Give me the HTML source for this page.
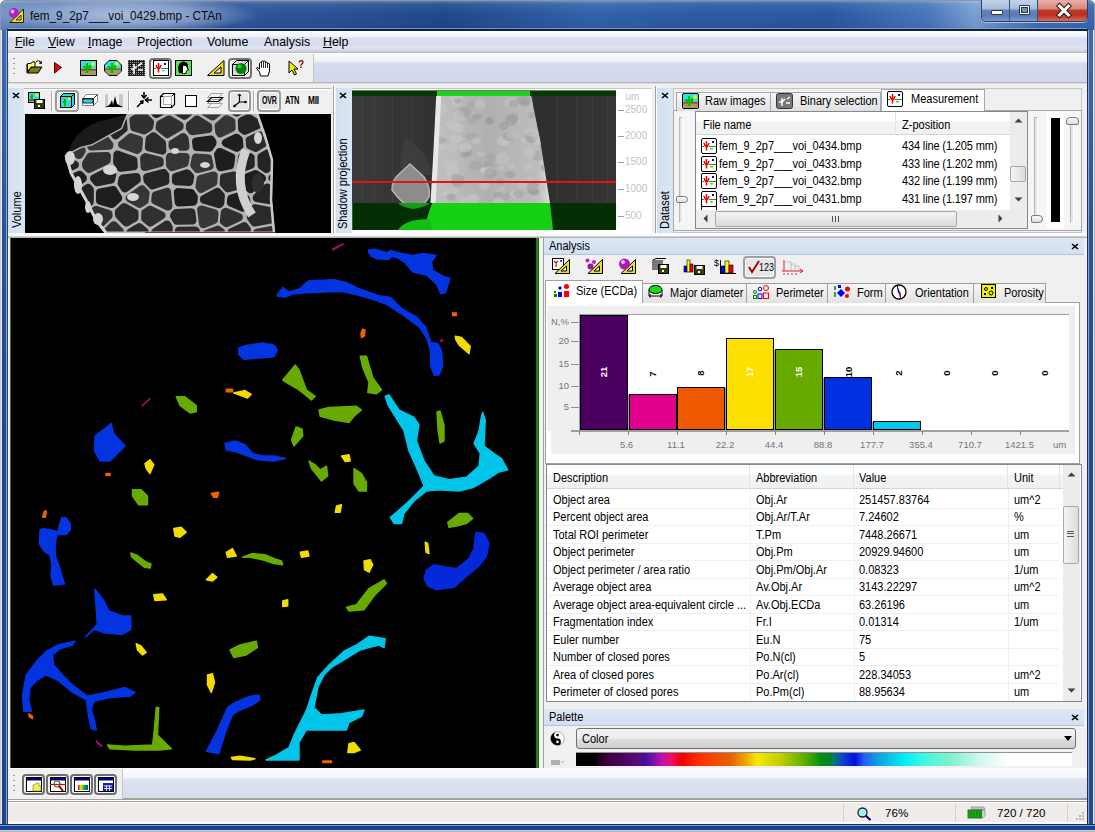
<!DOCTYPE html>
<html><head><meta charset="utf-8">
<style>
*{box-sizing:border-box;margin:0;padding:0}
html,body{width:1095px;height:832px;overflow:hidden;background:#fff}
body{position:relative;font-family:"Liberation Sans",sans-serif;font-size:11px;color:#000}
.a{position:absolute}
.t{position:absolute;white-space:pre;line-height:1}
svg{position:absolute;overflow:visible}
</style></head><body>
<!-- window frame -->
<div class="a" id="frame" style="left:0;top:0;width:1095px;height:832px;border-radius:6px 6px 0 0;background:linear-gradient(90deg,#6f8fc2 0px,#4a70ad 60px,#2f5799 220px,#2a5297 330px,#1f4a8c 445px,#3363ab 590px,#2d5ba5 700px,#2b5aa4 830px,#4a78bd 930px,#7aa0d2 975px,#3f70b8 1040px,#3a6ab4 1095px)"></div>
<div class="a" style="left:0;top:0;width:1095px;height:30px;border-radius:6px 6px 0 0;border:1px solid #8a96a8;border-bottom:none;background:linear-gradient(180deg,rgba(255,255,255,.28) 0,rgba(255,255,255,.08) 3px,rgba(255,255,255,0) 12px,rgba(0,0,40,.06) 24px,rgba(0,0,40,.12) 29px)"></div>
<div class="a" style="left:0;top:30px;width:8px;height:802px;background:linear-gradient(180deg,#3f6ab2 0,#2a5299 200px,#1e4590 400px,#1e4590 802px)"></div>
<div class="a" style="left:1087px;top:30px;width:8px;height:802px;background:linear-gradient(180deg,#3f6ab2 0,#2a5299 200px,#1e4a98 400px,#1e4a98 802px)"></div>
<div class="a" style="left:0;top:30px;width:2px;height:802px;background:linear-gradient(90deg,#c8ccd0 0,#c8ccd0 1px,#e8ecf0 1px)"></div>
<div class="a" style="left:6px;top:30px;width:2px;height:802px;background:linear-gradient(90deg,#90a8d0 0,#90a8d0 1px,#304060 1px)"></div>
<div class="a" style="left:1087px;top:30px;width:2px;height:802px;background:linear-gradient(90deg,#203050 0,#203050 1px,#90a8d0 1px)"></div>
<div class="a" style="left:1093px;top:30px;width:2px;height:802px;background:linear-gradient(90deg,#e0e8f0 0,#e0e8f0 1px,#b0b0b0 1px)"></div>
<div class="a" style="left:0;top:824px;width:1095px;height:8px;background:linear-gradient(180deg,#1a2a50 0,#1a2a50 1px,#7f9fd0 1px,#7f9fd0 2px,#0f3d8c 2px,#1d4d9c 6px,#c0cad8 6px,#c0cad8 7px,#b5b5b5 7px)"></div>
<!-- title -->
<div class="a" style="left:-10px;top:-4px;width:270px;height:38px;background:radial-gradient(ellipse 50% 50% at 50% 50%,rgba(215,226,244,.7) 0%,rgba(200,215,240,.5) 55%,rgba(180,200,235,.0) 100%)"></div>
<svg style="left:8px;top:7px" width="17" height="17"><path d="M2 15.5 L15.5 2 L15.5 15.5 Z" fill="#e8e020" stroke="#202000"/><path d="M8 13 L13 8 L13 13 Z" fill="#b8b880" stroke="#202000" stroke-width=".8"/><circle cx="6" cy="6" r="5" fill="#b020c0"/><circle cx="4.5" cy="4.5" r="2" fill="#f0b0f8"/></svg>
<div class="t" style="left:30px;top:10px;font-size:12.3px;color:#0a0a14;transform:scaleX(.955);transform-origin:0 0">fem_9_2p7___voi_0429.bmp - CTAn</div>
<!-- caption buttons -->
<div class="a" style="left:981px;top:0;width:107px;height:22px;border:1px solid #2e4060;border-top:none;border-radius:0 0 5px 5px;overflow:hidden;box-shadow:0 1px 0 #a8c4e8,-1px 0 0 #8aaad8">
 <div class="a" style="left:0;top:0;width:28px;height:21px;background:linear-gradient(180deg,#c4d2e8 0,#a9bedd 40%,#6384bd 50%,#5a7cb8 75%,#7a9cd0 100%);border-right:1px solid #3a5078"></div>
 <div class="a" style="left:28px;top:0;width:28px;height:21px;background:linear-gradient(180deg,#c4d2e8 0,#a9bedd 40%,#6384bd 50%,#5a7cb8 75%,#7a9cd0 100%);border-right:1px solid #3a5078"></div>
 <div class="a" style="left:56px;top:0;width:50px;height:21px;background:linear-gradient(180deg,#e8b0a8 0,#d88a80 40%,#c03a24 50%,#b83020 70%,#d86a58 100%)"></div>
</div>
<div class="a" style="left:991px;top:10px;width:12px;height:5px;background:#fff;border:1px solid #2a3448;border-radius:1px"></div>
<div class="a" style="left:1019px;top:5px;width:11px;height:10px;border:1px solid #2a3448;background:#fff;border-radius:1px"></div>
<div class="a" style="left:1021px;top:7px;width:7px;height:6px;border:1px solid #2a3448;background:#6f8fc4"></div>
<svg style="left:1057px;top:4px" width="14" height="13"><path d="M2.5 2 L11.5 11 M11.5 2 L2.5 11" stroke="#3a1a18" stroke-width="5" stroke-linecap="square"/><path d="M2.5 2 L11.5 11 M11.5 2 L2.5 11" stroke="#fff" stroke-width="3" stroke-linecap="square"/></svg>

<!-- client -->
<div class="a" id="client" style="left:8px;top:30px;width:1079px;height:794px;background:#f0f0f0;border-top:1px solid #102040"></div>
<div class="a" style="left:8px;top:28px;width:1079px;height:1px;background:#8fa6cc;opacity:.8"></div>
<div class="a" style="left:7px;top:29px;width:1081px;height:1px;background:#102040"></div>
<!-- menu bar -->
<div class="a" style="left:8px;top:31px;width:1079px;height:21px;background:linear-gradient(180deg,#fdfdfe 0,#eef1f8 6px,#d8deef 7px,#d8deef 14px,#dfe4f1 17px,#d6dae4 19px,#c8ccd6 21px)"></div>
<div class="a" style="left:8px;top:52px;width:1079px;height:1px;background:#bdbdc2"></div>
<div class="t" style="left:15px;top:36px;font-size:12.4px"><u>F</u>ile</div>
<div class="t" style="left:48px;top:36px;font-size:12.4px"><u>V</u>iew</div>
<div class="t" style="left:88px;top:36px;font-size:12.4px"><u>I</u>mage</div>
<div class="t" style="left:137px;top:36px;font-size:12.4px">Projection</div>
<div class="t" style="left:207px;top:36px;font-size:12.4px">Volume</div>
<div class="t" style="left:264px;top:36px;font-size:12.4px">Analysis</div>
<div class="t" style="left:323px;top:36px;font-size:12.4px"><u>H</u>elp</div>

<!-- main toolbar row -->
<div class="a" style="left:8px;top:53px;width:1079px;height:29px;background:linear-gradient(180deg,#fefefe 0,#eceff7 9px,#d5daec 10px,#d3d8ec 29px)"></div>
<div class="a" style="left:8px;top:82px;width:1079px;height:2px;background:linear-gradient(180deg,#b4b6be 0,#b4b6be 1px,#dcdcdc 1px)"></div>
<div class="a" id="tb1" style="left:9px;top:54px;width:305px;height:28px;background:#f0f0f0;border-right:1px solid #c5c5c5"></div>


<!-- main toolbar icons -->
<div class="a" style="left:13px;top:58px;width:2px;height:18px;background:repeating-linear-gradient(180deg,#a0a0a0 0,#a0a0a0 1px,transparent 1px,transparent 5px)"></div>
<svg style="left:26px;top:59px" width="17" height="16"><path d="M1 5 L1 14 L12 14 L16 8 L5 8 L2 13" fill="#7a7a18" stroke="#000" stroke-width="1"/><path d="M1.5 4.5 L5 4.5 L6 3 L9 3 L9 8 L5 8 L1.5 13 Z" fill="#ffff60" stroke="#000" stroke-width="1"/><path d="M10 3 Q13 0 15 4" fill="none" stroke="#000" stroke-width="1"/><path d="M13 4 L15.5 4.5 L15 2" fill="none" stroke="#000"/></svg>
<svg style="left:54px;top:62px" width="8" height="12"><path d="M0.5 0.5 L7.5 5.5 L0.5 11 Z" fill="#e00000" stroke="#400" stroke-width="1"/></svg>
<svg style="left:80px;top:60px" width="17" height="16"><rect x="0.5" y="0.5" width="16" height="15" fill="#30e0e8" stroke="#000"/><rect x="1" y="10" width="15" height="5" fill="#a89a58"/><rect x="1" y="9" width="15" height="1.5" fill="#c03030"/><circle cx="13" cy="4" r="2" fill="#f0f000"/><path d="M7 13 L7 3 M4 8 L4 6 M4 8 L10 8 L10 5" stroke="#00c000" stroke-width="2.4" fill="none"/></svg>
<svg style="left:104px;top:60px" width="18" height="16"><path d="M5 0.5 L13 0.5 L17.5 5 L17.5 11 L13 15.5 L5 15.5 L0.5 11 L0.5 5 Z" fill="#30e0e8" stroke="#000"/><path d="M1 9 L17 9 L17 11 L13 15 L5 15 L1 11 Z" fill="#a89a58"/><rect x="1" y="8.5" width="16" height="1.2" fill="#c03030"/><circle cx="13" cy="4" r="2" fill="#f0f000"/><path d="M8 13 L8 3 M5 8 L5 6 M5 8 L11 8 L11 5" stroke="#00c000" stroke-width="2.4" fill="none"/></svg>
<svg style="left:128px;top:60px" width="17" height="16"><defs><pattern id="nz" width="2" height="2" patternUnits="userSpaceOnUse"><rect width="2" height="2" fill="#202020"/><rect width="1" height="1" fill="#909090"/></pattern></defs><rect x="0" y="0" width="17" height="16" fill="url(#nz)"/><path d="M6 14 L6 4 M3 9 L6 9 L9 6 M10 10 L15 10 M10 6 L14 3" stroke="#fff" stroke-width="1.6" fill="none"/></svg>
<div class="a" style="left:149px;top:58px;width:23px;height:21px;border:2px solid #727272;border-radius:4px;background:#e6e6e6;box-shadow:inset 0 0 0 1px #fbfbfb"></div>
<svg style="left:153px;top:60px" width="16" height="16"><rect x="0.5" y="0.5" width="15" height="15" fill="#fff" stroke="#000"/><path d="M1 8.5 L3 8.5 M8 8.5 L15 8.5" stroke="#10a010" stroke-width="1"/><path d="M5.5 3 L5.5 12.5 M3 5 Q3.5 8 5.5 9 Q7.5 8 8 5" stroke="#f00000" stroke-width="1.5" fill="none"/><rect x="11" y="3" width="2" height="2" fill="#0000f0"/><rect x="9" y="10" width="3" height="1.5" fill="#30f0f0"/></svg>
<svg style="left:175px;top:60px" width="17" height="16"><rect x="0.5" y="0.5" width="16" height="15" fill="#60e060" stroke="#000"/><path d="M4 13 Q2 6 5 3 Q9 0 12 3 Q14 5 13 8 L14 10 L12 11 L11 14 Z" fill="#000"/><path d="M8 6 Q11 5 12 8 L12.5 10 L11 11 L10.5 13 L8 13 Z" fill="#fff"/></svg>
<svg style="left:207px;top:60px" width="18" height="16"><path d="M0.5 15.5 L17 0.5 L17 15.5 Z" fill="#e8e020" stroke="#000"/><path d="M7 13 L14 7 L14 13 Z" fill="#f0f0f0" stroke="#000"/></svg>
<div class="a" style="left:228px;top:58px;width:24px;height:21px;border:2px solid #727272;border-radius:4px;background:#e6e6e6;box-shadow:inset 0 0 0 1px #fbfbfb"></div>
<svg style="left:232px;top:60px" width="17" height="16"><path d="M0.5 4.5 L4.5 0.5 L16.5 0.5 L16.5 11.5 L12.5 15.5 L0.5 15.5 Z" fill="#d8d8d8" stroke="#000"/><path d="M0.5 4.5 L12.5 4.5 L12.5 15.5 M12.5 4.5 L16.5 0.5" stroke="#000" fill="none"/><circle cx="9" cy="8.5" r="5.5" fill="#008000"/><circle cx="7.5" cy="6.5" r="2" fill="#30d030"/></svg>
<svg style="left:256px;top:60px" width="16" height="17"><path d="M4.5 16 L3.5 12 L1 9 Q0 7.5 1.5 7.5 L3.5 9 L3.5 3.5 Q3.5 2.5 4.5 2.5 Q5.5 2.5 5.5 3.5 L5.5 2 Q5.5 1 6.5 1 Q7.5 1 7.5 2 L7.5 1.8 Q7.5 1 8.5 1 Q9.5 1 9.5 2 L9.5 3 Q9.5 2.2 10.5 2.2 Q11.5 2.2 11.5 3.2 L11.5 4 Q11.5 3.3 12.5 3.3 Q13.5 3.3 13.5 4.3 L13.5 11 L12 16 Z" fill="#fff" stroke="#000" stroke-width="1"/><path d="M5.5 3.5 L5.5 8 M7.5 2 L7.5 8 M9.5 3 L9.5 8 M11.5 4 L11.5 8" stroke="#000" stroke-width=".8"/></svg>
<svg style="left:288px;top:60px" width="17" height="16"><path d="M1 1 L1 13 L4 10 L6.5 15 L8.5 14 L6 9 L10 9 Z" fill="#f0f000" stroke="#000" stroke-width="1"/><text x="10" y="8" font-family="Liberation Sans" font-weight="bold" font-size="10" fill="#900000">?</text></svg>

<!-- top panels area -->
<div class="a" style="left:8px;top:84px;width:1079px;height:152px;background:#f0f0f0"></div>


<!-- ===== panel 1: Volume ===== -->
<div class="a" style="left:8px;top:88px;width:17px;height:145px;background:linear-gradient(90deg,#d3e0f1,#dbe6f4)"></div>
<svg style="left:12px;top:92px" width="8" height="7"><path d="M1 1 L7 6 M7 1 L1 6" stroke="#000" stroke-width="1.6"/></svg>
<div class="t" style="left:10.5px;top:227.5px;font-size:12px;transform:rotate(-90deg) scaleX(.917);transform-origin:0 0">Volume</div>
<div class="a" style="left:24px;top:88px;width:307px;height:26px;background:#f0f0f0;border-top:1px solid #b9b9b9;box-shadow:inset 0 1px 0 #fff"></div>
<svg style="left:28px;top:92px" width="17" height="17"><rect x="0.5" y="0.5" width="11" height="10" fill="#30e0e8" stroke="#000"/><path d="M4 9 L4 2 M2 5 L4 5" stroke="#00c000" stroke-width="2" fill="none"/><circle cx="9" cy="3" r="1.5" fill="#f0f000"/><rect x="1" y="7" width="10" height="2" fill="#c03030"/><rect x="6.5" y="7.5" width="10" height="9" fill="#3a3a0a" stroke="#000"/><rect x="8.5" y="8" width="6" height="3" fill="#fff"/><rect x="10" y="13" width="2" height="2" fill="#fff"/></svg>
<div class="a" style="left:51px;top:91px;width:2px;height:20px;border-left:1px solid #a8a8a8;border-right:1px solid #fff"></div>
<div class="a" style="left:55px;top:90px;width:24px;height:22px;border:2px solid #9a9a9a;border-radius:4px;background:#e6e6e6;box-shadow:inset 0 0 0 1px #fbfbfb"></div>
<svg style="left:60px;top:93px" width="15" height="15"><path d="M0.5 3.5 L3.5 0.5 L14.5 0.5 L14.5 11.5 L11.5 14.5 L0.5 14.5 Z" fill="#30d8e0" stroke="#000"/><path d="M0.5 3.5 L11.5 3.5 L11.5 14.5 M11.5 3.5 L14.5 0.5" stroke="#000" fill="none"/><path d="M5 13 L5 6 M3 9 L5 9" stroke="#00c000" stroke-width="2"/><circle cx="9" cy="6" r="1.5" fill="#f0f000"/></svg>
<svg style="left:82px;top:93px" width="16" height="15"><path d="M0.5 5.5 L4.5 1.5 L15.5 1.5 L15.5 8.5 L11.5 12.5 L0.5 12.5 Z" fill="#fff" stroke="#888"/><rect x="1" y="6" width="10" height="4" fill="#30d8e0" stroke="#000" stroke-width="0.8"/><path d="M0.5 5.5 L11.5 5.5 L15.5 1.5 M11.5 5.5 L11.5 12.5" stroke="#000" fill="none" stroke-width="0.8"/></svg>
<svg style="left:105px;top:93px" width="18" height="15"><rect x="0" y="1" width="18" height="14" fill="#c8c8c8"/><rect x="3" y="1" width="11" height="14" fill="#f0f0f0"/><path d="M0 14 L3 13 L5 11 L7 7 L8 12 L10 3 L12 11 L14 12 L18 14 Z" fill="#000"/></svg>
<div class="a" style="left:128px;top:91px;width:2px;height:20px;border-left:1px solid #a8a8a8;border-right:1px solid #fff"></div>
<svg style="left:136px;top:92px" width="17" height="16"><path d="M8 0 L8 5 M5.5 3 L8 6 L10.5 3 M16 8 L10 8 M12.5 5.5 L9.5 8 L12.5 10.5 M1 15 L6 10 M4 9.5 L7 9 L6.5 12" stroke="#000" stroke-width="1.5" fill="none"/></svg>
<svg style="left:160px;top:93px" width="15" height="15"><path d="M0.5 3.5 L3.5 0.5 L14.5 0.5 L14.5 11.5 L11.5 14.5 L0.5 14.5 Z" fill="#fff" stroke="#000" stroke-width="1.2"/><path d="M0.5 3.5 L11.5 3.5 L11.5 14.5 M11.5 3.5 L14.5 0.5" stroke="#000" fill="none"/><rect x="3.5" y="3.5" width="8" height="8" fill="none" stroke="#aaa"/></svg>
<div class="a" style="left:185px;top:95px;width:12px;height:12px;border:1.5px solid #000;background:#fff"></div>
<svg style="left:207px;top:93px" width="16" height="15"><path d="M0.5 4.5 L4.5 0.5 L15.5 0.5 L11.5 4.5 Z M0.5 10.5 L4.5 6.5 L15.5 6.5 L11.5 10.5 Z M0.5 14.5 L4.5 10.5 L15.5 10.5 L11.5 14.5 Z" fill="#f4f4f4" stroke="#a0a0a0"/><path d="M0.5 8.5 L4.5 4.5 L15.5 4.5 L11.5 8.5 Z" fill="none" stroke="#000" stroke-width="1.2"/></svg>
<div class="a" style="left:228px;top:90px;width:23px;height:22px;border:2px solid #9a9a9a;border-radius:4px;background:#e6e6e6;box-shadow:inset 0 0 0 1px #fbfbfb"></div>
<svg style="left:233px;top:93px" width="14" height="15"><path d="M6.5 1 L6.5 9 L12.5 9 M6.5 9 L1.5 13" stroke="#000" stroke-width="1.2" fill="none"/><circle cx="12.5" cy="9" r="1.3"/><circle cx="1.5" cy="13" r="1.3"/><path d="M5 3 L6.5 1 L8 3" stroke="#000" fill="none"/></svg>
<div class="a" style="left:253px;top:91px;width:2px;height:20px;border-left:1px solid #a8a8a8;border-right:1px solid #fff"></div>
<div class="a" style="left:257px;top:90px;width:24px;height:22px;border:2px solid #9a9a9a;border-radius:4px;background:#e6e6e6;box-shadow:inset 0 0 0 1px #fbfbfb"></div>
<div class="t" style="left:262px;top:95px;font-size:11px;transform:scaleX(.64);transform-origin:0 0;color:#000;font-weight:bold;letter-spacing:-0.3px">OVR</div>
<div class="t" style="left:285px;top:95px;font-size:11px;transform:scaleX(.68);transform-origin:0 0;color:#000;font-weight:bold;letter-spacing:-0.3px">ATN</div>
<div class="t" style="left:308px;top:95px;font-size:11px;transform:scaleX(.75);transform-origin:0 0;color:#000;font-weight:bold;letter-spacing:-0.3px">MII</div>
<!--VOL-->
<svg style="left:25px;top:114px;overflow:hidden" width="306" height="119"><rect width="306" height="119" fill="#000"/>
<path d="M43 40 Q48 18 72 8 L103 0 L96 14 L67 30 Z" fill="#1a1a1a"/>
<path d="M40.0,41.0 L55.0,33.0 L67.0,30.0 L85.0,20.0 L96.0,14.0 L102.0,-1.0 L232.0,-1.0 L240.0,22.0 L248.0,46.0 L247.0,86.0 L250.0,119.0 L81.0,119.0 L70.0,106.0 L60.0,86.0 L45.0,59.0 L40.0,41.0Z " fill="#b2b2b2"/>
<path d="M51.5,54.6 L52.6,53.9 L53.4,52.9 L53.8,51.8 L53.9,50.5 L53.6,49.3 L53.0,48.3 L52.0,47.5 L42.3,41.5 L41.8,41.8 L46.0,56.9 L51.5,54.6Z " fill="#242424"/>
<path d="M52.0,44.5 L53.2,45.0 L54.4,45.1 L55.6,44.8 L56.7,44.1 L57.5,43.2 L60.1,39.0 L60.6,37.9 L60.8,36.8 L60.6,35.7 L59.9,33.3 L55.5,34.4 L44.9,40.1 L52.0,44.5Z " fill="#363636"/>
<path d="M60.2,67.8 L61.0,67.0 L61.6,66.0 L61.8,64.9 L61.7,63.7 L61.6,63.1 L61.3,62.1 L60.6,61.2 L57.7,58.0 L56.7,57.3 L55.6,56.9 L54.3,56.8 L53.2,57.1 L47.1,59.7 L54.1,72.2 L60.2,67.8Z " fill="#1e1e1e"/>
<path d="M65.4,70.4 L64.3,69.9 L63.1,69.8 L61.9,70.0 L60.8,70.5 L55.3,74.5 L61.3,85.3 L61.3,85.3 L64.8,92.2 L65.5,92.1 L66.7,91.5 L67.3,91.0 L68.1,90.1 L68.6,89.1 L68.8,87.9 L68.9,75.9 L68.7,74.5 L68.0,73.3 L66.3,71.2 L65.4,70.4Z " fill="#242424"/>
<path d="M63.8,38.9 L62.7,39.5 L61.9,40.5 L57.6,47.4 L57.1,48.5 L57.0,49.7 L57.2,52.2 L57.5,53.5 L58.2,54.7 L61.1,57.7 L62.1,58.5 L63.3,58.9 L64.6,59.0 L65.8,58.6 L83.5,49.9 L84.6,49.0 L85.4,47.9 L85.7,46.5 L85.9,42.1 L85.7,40.8 L85.1,39.6 L84.2,38.7 L83.0,38.1 L81.7,38.0 L65.1,38.6 L63.8,38.9Z " fill="#303030"/>
<path d="M62.2,33.6 L62.8,34.7 L63.7,35.7 L64.9,36.3 L66.2,36.4 L84.6,35.7 L85.7,35.5 L86.7,35.0 L87.6,34.2 L88.1,33.1 L88.4,32.0 L88.4,31.2 L88.3,29.8 L87.7,28.5 L83.3,22.7 L67.7,31.3 L67.6,31.4 L67.5,31.4 L67.4,31.5 L62.0,32.8 L62.2,33.6Z " fill="#363636"/>
<path d="M66.3,94.8 L66.2,95.0 L71.3,105.2 L77.8,112.9 L86.4,104.4 L87.1,103.5 L87.5,102.4 L87.6,101.2 L87.4,99.4 L87.1,98.2 L86.5,97.2 L85.6,96.4 L84.6,95.9 L72.0,92.1 L70.7,92.0 L69.5,92.2 L68.4,92.8 L67.2,93.8 L66.3,94.8Z " fill="#303030"/>
<path d="M98.7,116.6 L98.3,115.5 L97.6,114.5 L91.7,108.4 L90.7,107.7 L89.5,107.3 L88.3,107.2 L87.1,107.6 L86.0,108.3 L79.4,114.8 L81.7,117.5 L98.7,117.5 L98.7,116.6Z " fill="#303030"/>
<path d="M87.4,23.8 L88.3,24.7 L89.5,25.2 L90.7,25.4 L92.0,25.1 L93.1,24.5 L101.2,17.8 L102.1,16.9 L102.6,15.7 L102.6,14.4 L101.9,6.5 L101.6,5.3 L101.3,4.8 L97.4,14.6 L97.3,14.7 L97.3,14.8 L97.2,14.9 L97.1,15.0 L97.0,15.2 L96.8,15.2 L96.7,15.3 L85.7,21.3 L85.6,21.4 L87.4,23.8Z " fill="#242424"/>
<path d="M66.2,61.4 L65.4,62.5 L65.0,63.8 L65.1,65.1 L65.1,65.4 L65.4,66.3 L66.0,67.1 L69.0,70.8 L70.1,71.7 L71.4,72.2 L72.8,72.2 L86.9,69.6 L88.0,69.2 L88.9,68.6 L89.6,67.6 L90.0,66.5 L91.2,61.4 L91.2,59.9 L90.6,58.5 L88.1,54.4 L87.3,53.5 L86.3,52.9 L85.2,52.6 L84.0,52.6 L82.9,52.9 L67.2,60.7 L66.2,61.4Z " fill="#242424"/>
<path d="M90.3,96.0 L89.9,97.1 L89.8,98.3 L90.1,101.5 L90.5,102.8 L91.2,103.9 L98.5,111.4 L99.6,112.2 L100.8,112.6 L102.2,112.5 L103.4,112.0 L111.5,107.2 L112.5,106.3 L113.2,105.1 L113.5,103.8 L113.5,99.0 L113.3,97.6 L112.6,96.3 L111.5,95.4 L101.0,89.6 L99.8,89.2 L98.6,89.1 L97.4,89.4 L96.3,90.1 L91.1,95.0 L90.3,96.0Z " fill="#2a2a2a"/>
<path d="M92.5,36.5 L91.3,36.6 L90.2,37.2 L89.3,38.0 L88.7,39.1 L88.4,40.3 L88.1,47.9 L88.2,49.1 L88.7,50.2 L92.3,56.0 L93.0,56.8 L94.0,57.5 L95.1,57.8 L96.2,57.8 L109.3,56.2 L110.5,55.9 L111.5,55.2 L112.2,54.3 L112.7,53.2 L112.8,52.0 L112.4,45.9 L112.2,44.8 L111.6,43.8 L110.8,43.0 L109.8,42.4 L93.8,36.7 L92.5,36.5Z " fill="#242424"/>
<path d="M73.0,74.9 L71.9,75.8 L71.3,77.0 L71.0,78.3 L70.9,86.5 L71.1,87.8 L71.7,88.9 L72.6,89.8 L73.8,90.4 L85.7,93.9 L87.1,94.1 L88.4,93.8 L89.6,93.0 L95.9,87.2 L96.6,86.4 L97.0,85.3 L97.2,84.3 L97.2,83.9 L97.0,82.8 L96.6,81.8 L91.6,73.8 L90.8,72.9 L89.8,72.3 L88.6,72.0 L87.5,72.0 L74.3,74.4 L73.0,74.9Z " fill="#1e1e1e"/>
<path d="M123.4,116.1 L122.5,114.8 L116.9,110.1 L115.8,109.4 L114.6,109.1 L113.4,109.2 L112.2,109.7 L103.2,115.1 L102.2,115.9 L101.6,116.8 L101.4,117.5 L123.8,117.5 L123.4,116.1Z " fill="#2a2a2a"/>
<path d="M92.6,70.0 L93.2,71.4 L96.4,76.6 L97.3,77.6 L98.4,78.2 L99.7,78.5 L101.0,78.3 L102.2,77.7 L114.1,69.0 L115.1,68.1 L115.7,66.8 L115.8,65.4 L115.5,62.5 L115.2,61.3 L114.5,60.2 L113.5,59.4 L112.3,59.0 L111.0,58.9 L97.1,60.6 L95.9,61.0 L94.9,61.7 L94.1,62.6 L93.7,63.8 L92.7,68.5 L92.6,70.0Z " fill="#242424"/>
<path d="M93.6,28.3 L93.1,29.4 L93.0,30.6 L93.2,31.8 L93.7,32.9 L94.5,33.7 L95.6,34.3 L110.7,39.7 L111.8,39.9 L113.0,39.8 L114.0,39.4 L114.9,38.7 L116.1,37.5 L116.9,36.3 L117.3,35.0 L118.0,26.2 L117.9,24.9 L117.3,23.6 L116.4,22.7 L115.2,22.1 L106.9,19.5 L105.6,19.3 L104.3,19.6 L103.2,20.2 L94.4,27.5 L93.6,28.3Z " fill="#363636"/>
<path d="M101.2,81.9 L100.6,83.1 L100.5,84.4 L100.8,85.7 L101.5,86.8 L102.5,87.7 L112.8,93.4 L114.2,93.9 L115.6,93.8 L116.9,93.3 L121.9,90.0 L122.8,89.2 L123.4,88.2 L123.7,87.1 L124.6,79.5 L124.5,78.3 L124.2,77.2 L123.5,76.3 L119.9,72.4 L119.0,71.7 L117.9,71.2 L116.8,71.1 L115.6,71.4 L114.6,71.9 L102.1,80.9 L101.2,81.9Z " fill="#363636"/>
<path d="M115.9,54.4 L116.4,55.4 L117.3,56.3 L118.3,56.8 L119.4,57.0 L120.6,56.9 L135.7,53.0 L137.0,52.4 L138.0,51.5 L138.6,50.3 L138.7,48.9 L138.6,46.4 L138.3,45.2 L137.7,44.1 L136.7,43.2 L135.6,42.7 L121.3,39.2 L119.9,39.1 L118.6,39.5 L117.5,40.3 L116.2,41.6 L115.5,42.5 L115.2,43.5 L115.1,44.6 L115.6,53.3 L115.9,54.4Z " fill="#303030"/>
<path d="M105.5,3.3 L104.9,4.3 L104.5,5.3 L104.5,6.4 L105.2,13.7 L105.5,14.9 L106.1,15.9 L106.9,16.7 L108.0,17.2 L117.9,20.2 L119.1,20.4 L120.2,20.3 L121.3,19.8 L126.4,16.4 L127.2,15.7 L127.8,14.8 L128.2,13.8 L129.0,9.0 L129.0,7.7 L128.6,6.5 L127.9,5.5 L122.8,0.5 L109.9,0.5 L106.4,2.6 L105.5,3.3Z " fill="#303030"/>
<path d="M200.0,117.4 L199.7,116.4 L199.1,115.4 L198.4,114.7 L195.2,112.4 L194.0,111.8 L192.7,111.6 L191.4,111.9 L179.7,116.3 L178.5,117.1 L178.2,117.5 L200.0,117.5 L200.0,117.4Z " fill="#303030"/>
<path d="M147.6,113.3 L147.5,112.2 L147.1,111.3 L145.6,108.5 L144.7,107.5 L143.7,106.8 L142.4,106.5 L141.1,106.6 L139.9,107.1 L128.1,114.7 L127.1,115.7 L126.4,117.0 L126.4,117.5 L147.6,117.5 L147.6,113.3Z " fill="#2a2a2a"/>
<path d="M125.3,91.8 L123.9,91.8 L122.7,92.4 L118.1,95.4 L117.1,96.2 L116.5,97.4 L116.3,98.7 L116.2,104.3 L116.3,105.5 L116.8,106.5 L117.6,107.4 L122.7,111.7 L123.7,112.4 L125.0,112.7 L126.2,112.6 L127.4,112.1 L138.7,104.8 L139.6,104.0 L140.3,103.0 L140.5,101.8 L140.5,100.6 L140.1,99.5 L139.3,98.5 L138.3,97.8 L126.6,92.1 L125.3,91.8Z " fill="#303030"/>
<path d="M128.6,2.9 L129.6,3.6 L130.8,4.0 L132.1,4.0 L133.3,3.6 L139.2,0.5 L126.2,0.5 L128.6,2.9Z " fill="#1e1e1e"/>
<path d="M140.8,55.6 L139.8,55.1 L138.7,54.9 L137.6,55.0 L121.2,59.2 L120.1,59.7 L119.2,60.4 L118.6,61.3 L118.2,62.4 L118.2,63.5 L118.5,66.6 L118.8,67.9 L119.5,69.0 L124.4,74.2 L125.3,74.9 L126.4,75.4 L127.5,75.5 L128.6,75.3 L141.6,71.1 L142.8,70.5 L143.7,69.6 L144.2,68.5 L144.4,67.2 L144.2,60.7 L143.9,59.3 L143.2,58.2 L141.6,56.3 L140.8,55.6Z " fill="#242424"/>
<path d="M121.5,22.2 L120.9,23.2 L120.6,24.4 L119.9,33.0 L120.0,34.4 L120.6,35.7 L121.6,36.7 L122.9,37.2 L136.4,40.6 L137.7,40.7 L138.9,40.4 L140.0,39.7 L140.8,38.7 L140.9,38.6 L141.3,37.5 L141.4,36.3 L141.0,28.9 L140.8,27.8 L140.3,26.8 L139.5,26.0 L131.0,19.1 L129.9,18.4 L128.7,18.2 L127.4,18.3 L126.3,18.8 L122.4,21.4 L121.5,22.2Z " fill="#2a2a2a"/>
<path d="M143.9,39.0 L142.7,39.6 L141.8,40.7 L141.3,41.5 L140.9,42.6 L140.8,43.8 L141.2,51.5 L141.5,52.8 L142.1,53.9 L143.8,55.8 L144.6,56.6 L145.7,57.0 L146.9,57.2 L148.0,57.0 L160.8,53.0 L162.0,52.3 L163.0,51.3 L163.5,49.9 L164.7,43.8 L164.7,42.7 L164.4,41.6 L163.9,40.6 L163.0,39.8 L162.0,39.3 L160.8,39.1 L145.3,38.7 L143.9,39.0Z " fill="#363636"/>
<path d="M130.6,14.7 L131.1,16.0 L132.0,17.0 L139.8,23.3 L140.8,23.9 L142.0,24.2 L143.2,24.1 L144.3,23.6 L156.6,16.2 L157.6,15.4 L158.3,14.2 L158.6,12.9 L158.6,11.6 L158.4,10.2 L157.7,8.9 L156.6,8.0 L146.2,1.9 L145.0,1.5 L143.6,1.4 L142.3,1.8 L133.4,6.5 L132.4,7.2 L131.7,8.2 L131.3,9.4 L130.6,13.2 L130.6,14.7Z " fill="#303030"/>
<path d="M128.5,78.0 L127.7,78.8 L127.1,79.7 L126.8,80.8 L126.2,86.0 L126.3,87.2 L126.7,88.4 L127.4,89.3 L128.4,90.0 L141.2,96.3 L142.4,96.6 L143.7,96.6 L144.9,96.2 L145.9,95.4 L146.4,94.9 L147.0,94.0 L147.3,92.9 L147.4,91.8 L146.0,77.3 L145.7,76.1 L145.1,75.1 L144.2,74.3 L143.1,73.8 L141.9,73.7 L140.8,73.9 L129.5,77.5 L128.5,78.0Z " fill="#303030"/>
<path d="M210.0,2.1 L211.1,2.4 L212.4,2.4 L213.5,2.1 L216.7,0.5 L206.9,0.5 L210.0,2.1Z " fill="#1e1e1e"/>
<path d="M147.2,68.4 L147.7,69.5 L148.6,70.3 L149.6,70.9 L150.8,71.2 L164.1,71.9 L165.2,71.8 L166.3,71.4 L167.3,70.6 L167.9,69.7 L168.3,68.6 L169.1,63.2 L169.1,62.0 L168.8,60.8 L168.1,59.8 L165.1,56.6 L164.2,55.9 L163.2,55.5 L162.0,55.3 L160.9,55.5 L149.7,59.1 L148.5,59.7 L147.6,60.6 L147.0,61.7 L146.9,63.0 L147.0,67.3 L147.2,68.4Z " fill="#242424"/>
<path d="M175.0,116.7 L174.5,115.4 L173.8,114.4 L172.9,113.4 L171.7,112.8 L170.4,112.6 L153.8,112.8 L152.5,113.0 L151.4,113.6 L150.6,114.4 L150.0,115.5 L149.8,116.8 L149.8,117.5 L175.1,117.5 L175.0,116.7Z " fill="#2a2a2a"/>
<path d="M145.4,99.7 L145.1,101.0 L145.0,101.7 L145.1,102.8 L145.6,104.0 L148.3,108.8 L149.2,109.9 L150.4,110.6 L151.8,110.8 L167.4,110.6 L168.8,110.4 L169.9,109.7 L170.8,108.7 L171.3,107.5 L171.4,106.1 L170.3,97.7 L170.0,96.6 L169.3,95.6 L168.4,94.8 L167.3,94.4 L166.1,94.2 L151.1,95.0 L149.6,95.3 L148.3,96.3 L146.1,98.6 L145.4,99.7Z " fill="#2a2a2a"/>
<path d="M157.5,5.2 L158.6,5.7 L159.8,5.8 L160.9,5.5 L162.0,4.9 L167.4,0.5 L149.4,0.5 L157.5,5.2Z " fill="#2a2a2a"/>
<path d="M169.9,39.6 L168.8,40.1 L167.9,40.8 L167.2,41.7 L166.8,42.8 L165.3,50.6 L165.3,51.9 L165.6,53.1 L166.3,54.1 L169.8,57.9 L170.9,58.7 L172.3,59.1 L173.7,59.0 L185.6,55.9 L186.7,55.4 L187.7,54.6 L188.3,53.6 L188.6,52.4 L188.6,51.2 L187.0,43.4 L186.6,42.2 L185.7,41.2 L184.6,40.5 L183.3,40.2 L171.0,39.5 L169.9,39.6Z " fill="#363636"/>
<path d="M161.8,36.5 L163.0,35.9 L163.9,34.8 L164.4,33.6 L164.5,32.2 L163.6,24.3 L163.3,23.2 L162.8,22.3 L161.6,20.7 L160.7,19.9 L159.7,19.3 L158.5,19.1 L157.4,19.2 L156.3,19.6 L145.4,26.2 L144.3,27.2 L143.6,28.5 L143.5,29.9 L143.6,32.6 L143.8,33.8 L144.4,34.8 L145.3,35.7 L146.3,36.2 L147.5,36.4 L160.4,36.7 L161.8,36.5Z " fill="#303030"/>
<path d="M151.5,74.3 L150.3,74.9 L149.4,75.9 L148.8,77.1 L148.7,78.5 L149.7,88.9 L150.0,90.1 L150.7,91.1 L151.6,91.9 L152.7,92.4 L153.9,92.5 L168.3,91.8 L169.4,91.6 L170.4,91.1 L171.2,90.4 L171.6,89.9 L172.2,88.8 L172.5,87.7 L172.8,83.6 L172.7,82.3 L172.2,81.1 L169.4,76.7 L168.6,75.8 L167.5,75.2 L166.3,74.9 L152.9,74.1 L151.5,74.3Z " fill="#1e1e1e"/>
<path d="M161.7,8.7 L161.2,9.7 L161.0,10.9 L160.9,14.1 L161.1,15.4 L161.7,16.6 L163.9,19.6 L165.0,20.5 L166.3,21.1 L167.7,21.2 L183.8,19.1 L185.0,18.8 L186.0,18.1 L186.8,17.2 L187.2,16.1 L187.3,14.8 L187.1,12.0 L186.8,10.8 L186.1,9.8 L185.2,9.0 L174.0,2.1 L172.8,1.6 L171.6,1.5 L170.4,1.7 L169.4,2.3 L162.5,7.9 L161.7,8.7Z " fill="#303030"/>
<path d="M170.5,73.5 L171.1,74.8 L172.7,77.2 L173.4,78.1 L174.5,78.7 L175.6,79.0 L176.8,79.0 L177.9,78.6 L190.3,71.9 L191.4,71.0 L192.1,69.9 L192.4,68.6 L192.7,61.7 L192.6,60.4 L192.1,59.3 L191.2,58.4 L190.2,57.7 L188.9,57.5 L187.7,57.6 L174.6,61.0 L173.6,61.5 L172.7,62.2 L172.0,63.2 L171.7,64.3 L170.5,72.0 L170.5,73.5Z " fill="#363636"/>
<path d="M176.0,91.4 L174.7,91.7 L173.6,92.4 L172.7,93.4 L172.2,94.6 L172.2,95.9 L174.0,110.3 L174.7,112.0 L174.9,112.4 L175.8,113.4 L177.0,114.0 L178.4,114.2 L179.7,113.9 L190.3,109.8 L191.2,109.3 L192.0,108.5 L192.6,107.5 L192.8,106.5 L193.5,99.8 L193.4,98.4 L192.8,97.1 L191.9,96.1 L190.7,95.5 L177.3,91.6 L176.0,91.4Z " fill="#363636"/>
<path d="M190.2,9.6 L189.7,10.8 L189.6,12.1 L190.2,18.2 L190.4,19.1 L190.8,20.0 L191.8,21.6 L192.5,22.5 L193.5,23.2 L194.6,23.5 L195.8,23.5 L196.9,23.1 L208.4,17.6 L209.3,17.0 L210.0,16.1 L210.5,15.0 L210.6,13.9 L210.4,7.4 L210.1,6.0 L209.3,4.8 L208.2,4.0 L203.3,1.5 L202.2,1.2 L201.0,1.1 L199.9,1.4 L198.9,2.0 L191.1,8.7 L190.2,9.6Z " fill="#363636"/>
<path d="M185.6,37.5 L186.8,36.9 L187.8,36.0 L190.8,31.6 L191.3,30.6 L191.5,29.5 L191.5,28.2 L191.4,27.0 L190.9,26.0 L189.4,23.5 L188.6,22.6 L187.7,22.0 L186.6,21.6 L185.5,21.6 L170.5,23.5 L169.3,23.8 L168.3,24.5 L167.5,25.5 L167.1,26.7 L167.0,27.9 L167.7,33.5 L168.1,34.8 L168.9,35.9 L170.1,36.7 L171.4,37.0 L184.3,37.7 L185.6,37.5Z " fill="#1e1e1e"/>
<path d="M195.1,33.9 L193.8,34.0 L192.5,34.6 L191.5,35.6 L189.7,38.3 L189.2,39.3 L189.0,40.3 L189.1,41.3 L191.4,53.7 L191.9,54.9 L192.6,55.9 L193.0,56.2 L194.0,56.9 L195.2,57.2 L196.5,57.2 L205.9,55.3 L207.0,54.9 L208.0,54.2 L208.7,53.1 L209.1,52.0 L210.2,43.6 L210.2,42.4 L209.7,41.2 L209.0,40.2 L207.9,39.5 L196.5,34.3 L195.1,33.9Z " fill="#1e1e1e"/>
<path d="M194.3,74.3 L193.0,73.8 L191.7,73.8 L190.4,74.2 L177.1,81.5 L176.0,82.3 L175.3,83.4 L175.0,84.6 L174.9,85.5 L175.0,86.8 L175.6,88.1 L176.6,89.0 L177.8,89.6 L192.9,94.1 L194.1,94.2 L195.3,94.0 L196.4,93.4 L197.6,92.5 L198.4,91.7 L198.9,90.8 L199.2,89.7 L199.9,82.3 L199.9,81.2 L199.6,80.2 L199.0,79.3 L195.3,75.1 L194.3,74.3Z " fill="#242424"/>
<path d="M196.6,95.9 L196.0,96.9 L195.8,98.0 L194.9,106.9 L195.0,108.3 L195.5,109.6 L196.5,110.6 L199.1,112.5 L200.4,113.1 L201.8,113.2 L203.2,112.8 L215.6,106.9 L216.6,106.2 L217.4,105.1 L217.8,103.9 L217.8,102.6 L217.3,101.3 L216.5,100.3 L215.4,99.6 L202.2,94.0 L200.8,93.7 L199.5,93.9 L198.2,94.5 L197.4,95.2 L196.6,95.9Z " fill="#303030"/>
<path d="M185.4,6.0 L186.5,6.5 L187.8,6.6 L189.0,6.3 L190.0,5.7 L196.2,0.5 L176.4,0.5 L185.4,6.0Z " fill="#363636"/>
<path d="M247.5,112.5 L246.2,112.1 L245.0,112.2 L231.3,114.8 L230.1,115.2 L229.2,116.0 L228.5,117.0 L228.3,117.5 L248.4,117.5 L247.9,112.8 L247.5,112.5Z " fill="#303030"/>
<path d="M203.8,115.2 L203.1,116.2 L202.6,117.4 L202.6,117.5 L225.7,117.5 L225.8,116.1 L225.8,114.6 L225.1,113.3 L222.5,109.7 L221.5,108.7 L220.3,108.2 L218.9,108.1 L217.6,108.4 L204.8,114.5 L203.8,115.2Z " fill="#2a2a2a"/>
<path d="M214.1,4.3 L213.4,5.1 L213.0,6.2 L212.9,7.3 L213.1,15.0 L213.3,16.2 L213.8,17.2 L214.6,18.0 L217.3,20.1 L218.6,20.8 L220.0,21.0 L221.4,20.6 L234.3,14.7 L235.4,14.0 L235.6,13.8 L232.4,4.8 L225.7,0.5 L225.6,0.5 L221.4,0.5 L215.1,3.6 L214.1,4.3Z " fill="#242424"/>
<path d="M197.0,59.8 L195.9,60.7 L195.3,61.8 L195.0,63.1 L194.7,69.5 L194.9,71.0 L195.6,72.3 L199.8,77.1 L200.7,77.8 L201.7,78.3 L202.8,78.4 L203.9,78.3 L213.6,75.4 L214.8,74.8 L215.8,73.8 L216.3,72.5 L216.4,71.2 L215.6,62.7 L215.3,61.6 L214.7,60.6 L213.8,59.8 L211.0,58.0 L209.6,57.5 L208.1,57.5 L198.2,59.4 L197.0,59.8Z " fill="#2a2a2a"/>
<path d="M198.0,26.0 L197.2,27.0 L196.8,28.2 L196.8,29.5 L197.3,30.7 L198.0,31.8 L199.1,32.5 L210.1,37.5 L211.3,37.8 L212.6,37.7 L213.8,37.2 L216.5,35.6 L217.4,34.9 L218.0,34.0 L218.4,32.9 L218.4,31.8 L217.9,25.2 L217.7,24.2 L217.1,23.2 L216.4,22.4 L214.0,20.5 L213.0,20.0 L211.9,19.7 L210.8,19.7 L209.8,20.1 L199.0,25.2 L198.0,26.0Z " fill="#1e1e1e"/>
<path d="M201.9,89.3 L202.4,90.5 L203.2,91.5 L204.3,92.2 L216.5,97.4 L217.6,97.7 L218.8,97.6 L219.9,97.2 L220.9,96.6 L221.6,95.6 L225.0,89.6 L225.4,88.2 L225.4,86.8 L224.8,84.0 L224.3,82.8 L223.4,81.7 L219.3,78.3 L218.2,77.7 L216.9,77.4 L215.6,77.6 L205.1,80.7 L204.0,81.2 L203.2,82.0 L202.5,83.0 L202.3,84.1 L201.9,88.1 L201.9,89.3Z " fill="#1e1e1e"/>
<path d="M220.8,37.1 L219.5,37.2 L218.3,37.7 L215.0,39.7 L214.1,40.5 L213.4,41.4 L213.1,42.6 L211.7,52.7 L211.7,53.9 L212.0,54.9 L212.7,55.9 L213.5,56.6 L214.9,57.5 L216.1,58.0 L217.3,58.2 L218.5,57.9 L227.3,54.6 L228.3,54.0 L229.2,53.1 L229.7,52.0 L229.8,50.8 L229.6,43.3 L229.5,42.3 L229.0,41.2 L228.2,40.4 L227.3,39.8 L222.1,37.4 L220.8,37.1Z " fill="#242424"/>
<path d="M228.1,81.8 L227.7,83.1 L227.7,84.4 L227.8,84.8 L228.2,85.9 L228.9,86.8 L229.9,87.5 L231.0,87.9 L242.9,90.1 L244.1,90.2 L245.2,89.8 L245.8,89.5 L245.5,86.1 L245.5,86.0 L245.9,71.4 L245.1,70.6 L244.1,69.9 L242.9,69.6 L241.7,69.5 L240.5,69.9 L239.5,70.6 L228.9,80.7 L228.1,81.8Z " fill="#242424"/>
<path d="M221.9,101.0 L221.8,102.2 L222.0,103.9 L222.2,105.0 L222.7,105.9 L226.4,110.9 L227.1,111.7 L228.1,112.3 L229.2,112.5 L230.4,112.5 L247.6,109.2 L246.2,93.3 L246.1,93.3 L245.1,93.0 L230.7,90.3 L229.5,90.3 L228.3,90.6 L227.3,91.3 L226.5,92.3 L222.3,99.8 L221.9,101.0Z " fill="#2a2a2a"/>
<path d="M219.2,74.7 L220.2,75.9 L223.1,78.3 L224.1,78.9 L225.2,79.2 L226.4,79.1 L227.5,78.8 L228.4,78.1 L239.8,67.3 L240.5,66.4 L240.9,65.3 L241.0,64.1 L240.7,63.0 L240.1,61.9 L239.3,61.1 L232.9,56.8 L231.7,56.2 L230.5,56.1 L229.2,56.3 L220.4,59.7 L219.2,60.3 L218.4,61.3 L217.9,62.5 L217.8,63.8 L218.7,73.2 L219.2,74.7Z " fill="#1e1e1e"/>
<path d="M221.5,33.2 L222.3,34.3 L223.4,35.1 L228.9,37.6 L230.1,37.9 L231.4,37.9 L232.6,37.4 L240.3,32.7 L241.2,32.0 L241.6,31.4 L238.6,22.5 L237.0,17.9 L236.9,17.8 L235.7,17.4 L234.5,17.4 L233.4,17.7 L223.0,22.5 L222.0,23.1 L221.2,24.1 L220.7,25.2 L220.7,26.4 L221.1,31.8 L221.5,33.2Z " fill="#2a2a2a"/>
<path d="M232.8,53.0 L233.4,54.1 L234.3,55.0 L239.3,58.4 L240.5,58.9 L241.8,59.1 L243.0,58.8 L244.1,58.1 L246.2,56.3 L246.5,46.2 L242.9,35.5 L242.7,35.5 L241.3,35.5 L240.1,36.0 L234.3,39.5 L233.2,40.4 L232.6,41.7 L232.4,43.0 L232.6,51.8 L232.8,53.0Z " fill="#242424"/>
<path d="M243.9,61.9 L243.4,63.1 L243.4,64.4 L243.8,65.7 L244.6,66.8 L245.9,68.1 L246.2,59.7 L244.8,60.9 L243.9,61.9Z " fill="#2a2a2a"/>
<ellipse cx="85" cy="56" rx="7" ry="5" fill="#d6d6d6"/>
<ellipse cx="108" cy="83" rx="6" ry="4" fill="#d6d6d6"/>
<ellipse cx="45" cy="44" rx="5" ry="7" fill="#d6d6d6"/>
<ellipse cx="53" cy="71" rx="4" ry="9" fill="#d6d6d6"/>
<ellipse cx="63" cy="93" rx="3" ry="6" fill="#d6d6d6"/>
<ellipse cx="180" cy="51" rx="5" ry="3" fill="#d6d6d6"/>
<ellipse cx="150" cy="37" rx="4" ry="3" fill="#d6d6d6"/>
<ellipse cx="73" cy="105" rx="5" ry="6" fill="#d6d6d6"/>
<ellipse cx="233" cy="24" rx="4" ry="6" fill="#d6d6d6"/>
<path d="M221 36 Q207 71 227 101" stroke="#d0d0d0" stroke-width="9" fill="none"/>
<ellipse cx="233" cy="69" rx="6" ry="10" fill="#2e2e2e"/>
<path d="M41 41 L46 59 L61 86 L71 106 L81 119" stroke="#d4d4d4" stroke-width="3" fill="none"/>
<path d="M232 -1 L240 22 L247 46 L246 86 L249 119" stroke="#c8c8c8" stroke-width="2.5" fill="none"/>
<rect x="120" y="118" width="130" height="1" fill="#6a3a6a"/>
</svg>
<!--/VOL-->
<div class="a" style="left:333px;top:86px;width:1px;height:148px;background:#a0a0a0"></div>
<div class="a" style="left:334px;top:86px;width:1px;height:148px;background:#fff"></div>

<!-- ===== panel 2: Shadow projection ===== -->
<div class="a" style="left:336px;top:88px;width:16px;height:145px;background:linear-gradient(90deg,#d3e0f1,#dbe6f4)"></div>
<svg style="left:339px;top:92px" width="8" height="7"><path d="M1 1 L7 6 M7 1 L1 6" stroke="#000" stroke-width="1.6"/></svg>
<div class="t" style="left:337px;top:229px;font-size:12px;transform:rotate(-90deg) scaleX(.917);transform-origin:0 0">Shadow projection</div>
<div class="a" style="left:352px;top:88px;width:300px;height:145px;background:#fff;border-top:1px solid #c8c8c8"></div>
<!--SHAD-->
<svg style="left:352px;top:90px;overflow:hidden" width="264" height="140"><defs>
<linearGradient id="sh" x1="0" x2="1" y1="0" y2="0"><stop offset="0" stop-color="#e8e8e8"/><stop offset="0.08" stop-color="#c0c0c0"/><stop offset="0.5" stop-color="#b0b0b0"/><stop offset="0.9" stop-color="#bdbdbd"/><stop offset="1" stop-color="#e0e0e0"/></linearGradient>
<linearGradient id="bg" x1="0" x2="1" y1="0" y2="0"><stop offset="0" stop-color="#3a3a3a"/><stop offset="0.3" stop-color="#323232"/><stop offset="0.7" stop-color="#2e2e2e"/><stop offset="1" stop-color="#353535"/></linearGradient>
<clipPath id="shc"><polygon points="85,0 178,0 188,50 198,113 199,140 72,140 80,113 82,60"/></clipPath>
</defs>
<rect width="264" height="140" fill="url(#bg)"/>
<rect x="10" y="0" width="1" height="140" fill="#444" opacity="0.6"/>
<rect x="22" y="0" width="1" height="140" fill="#444" opacity="0.6"/>
<rect x="40" y="0" width="1" height="140" fill="#444" opacity="0.6"/>
<rect x="60" y="0" width="1" height="140" fill="#444" opacity="0.6"/>
<rect x="180" y="0" width="1" height="140" fill="#444" opacity="0.6"/>
<rect x="205" y="0" width="1" height="140" fill="#444" opacity="0.6"/>
<rect x="225" y="0" width="1" height="140" fill="#444" opacity="0.6"/>
<rect x="240" y="0" width="1" height="140" fill="#444" opacity="0.6"/>
<rect x="255" y="0" width="1" height="140" fill="#444" opacity="0.6"/>
<path d="M53 48 Q76 60 80 85 L50 85 Q46 65 53 48 Z" fill="#404040" opacity="0.8"/>
<path d="M58 74 L72 87 Q79 98 77 107 Q72 116 61 119 Q50 114 40 100 Q40 90 46 85 Z" fill="#8c8c8c" stroke="#b4b4b4" stroke-width="1.5"/>
<polygon points="85,0 178,0 188,50 198,113 199,140 72,140 80,113 82,60" fill="url(#sh)"/>
<g clip-path="url(#shc)">
<ellipse cx="113.0" cy="64.2" rx="4.5" ry="3.8" fill="#9a9a9a" opacity="0.55"/>
<ellipse cx="151.6" cy="103.2" rx="4.9" ry="4.0" fill="#a2a2a2" opacity="0.55"/>
<ellipse cx="192.5" cy="56.3" rx="6.3" ry="5.0" fill="#a2a2a2" opacity="0.55"/>
<ellipse cx="112.4" cy="22.2" rx="6.7" ry="5.1" fill="#9a9a9a" opacity="0.55"/>
<ellipse cx="158.5" cy="12.9" rx="6.0" ry="5.0" fill="#c4c4c4" opacity="0.55"/>
<ellipse cx="169.9" cy="94.1" rx="4.1" ry="3.4" fill="#c8c8c8" opacity="0.55"/>
<ellipse cx="163.0" cy="104.6" rx="4.6" ry="4.2" fill="#c8c8c8" opacity="0.55"/>
<ellipse cx="189.2" cy="20.4" rx="4.5" ry="2.7" fill="#c8c8c8" opacity="0.55"/>
<ellipse cx="110.8" cy="109.3" rx="4.7" ry="4.0" fill="#c4c4c4" opacity="0.55"/>
<ellipse cx="132.2" cy="95.2" rx="5.3" ry="4.3" fill="#c8c8c8" opacity="0.55"/>
<ellipse cx="149.3" cy="102.7" rx="5.7" ry="5.6" fill="#c4c4c4" opacity="0.55"/>
<ellipse cx="192.1" cy="77.8" rx="3.7" ry="3.4" fill="#9a9a9a" opacity="0.55"/>
<ellipse cx="163.0" cy="28.6" rx="6.3" ry="5.2" fill="#c4c4c4" opacity="0.55"/>
<ellipse cx="101.1" cy="57.6" rx="5.6" ry="4.4" fill="#c4c4c4" opacity="0.55"/>
<ellipse cx="172.1" cy="49.9" rx="3.6" ry="2.6" fill="#c8c8c8" opacity="0.55"/>
<ellipse cx="179.6" cy="10.7" rx="5.5" ry="3.4" fill="#c4c4c4" opacity="0.55"/>
<ellipse cx="145.8" cy="104.6" rx="4.1" ry="2.9" fill="#9a9a9a" opacity="0.55"/>
<ellipse cx="120.5" cy="14.2" rx="5.4" ry="3.3" fill="#a2a2a2" opacity="0.55"/>
<ellipse cx="190.0" cy="37.2" rx="4.1" ry="3.6" fill="#c4c4c4" opacity="0.55"/>
<ellipse cx="121.0" cy="108.6" rx="6.6" ry="4.9" fill="#c8c8c8" opacity="0.55"/>
<ellipse cx="179.3" cy="47.3" rx="6.5" ry="5.6" fill="#9a9a9a" opacity="0.55"/>
<ellipse cx="153.1" cy="106.6" rx="5.0" ry="3.9" fill="#a2a2a2" opacity="0.55"/>
<ellipse cx="186.3" cy="52.8" rx="4.0" ry="2.9" fill="#c4c4c4" opacity="0.55"/>
<ellipse cx="89.2" cy="50.4" rx="5.3" ry="3.2" fill="#a2a2a2" opacity="0.55"/>
<ellipse cx="94.3" cy="73.1" rx="4.9" ry="4.2" fill="#c4c4c4" opacity="0.55"/>
<ellipse cx="151.9" cy="35.8" rx="5.0" ry="4.1" fill="#9a9a9a" opacity="0.55"/>
<ellipse cx="189.1" cy="32.9" rx="4.8" ry="4.0" fill="#c4c4c4" opacity="0.55"/>
<ellipse cx="106.6" cy="25.8" rx="6.0" ry="5.7" fill="#c4c4c4" opacity="0.55"/>
<ellipse cx="119.5" cy="46.4" rx="6.1" ry="3.7" fill="#a2a2a2" opacity="0.55"/>
<ellipse cx="120.6" cy="29.8" rx="6.2" ry="4.3" fill="#a2a2a2" opacity="0.55"/>
<ellipse cx="159.2" cy="75.5" rx="3.4" ry="2.8" fill="#c4c4c4" opacity="0.55"/>
<ellipse cx="158.9" cy="30.0" rx="6.2" ry="6.1" fill="#9a9a9a" opacity="0.55"/>
<ellipse cx="123.4" cy="75.6" rx="6.5" ry="5.1" fill="#a2a2a2" opacity="0.55"/>
<ellipse cx="170.6" cy="9.6" rx="6.8" ry="5.0" fill="#a2a2a2" opacity="0.55"/>
<ellipse cx="178.7" cy="42.4" rx="6.3" ry="4.0" fill="#c4c4c4" opacity="0.55"/>
<ellipse cx="149.9" cy="51.1" rx="5.1" ry="4.8" fill="#c8c8c8" opacity="0.55"/>
<ellipse cx="124.4" cy="50.6" rx="4.7" ry="3.6" fill="#c8c8c8" opacity="0.55"/>
<ellipse cx="104.4" cy="6.5" rx="6.8" ry="6.4" fill="#c8c8c8" opacity="0.55"/>
<ellipse cx="146.7" cy="111.5" rx="5.9" ry="3.6" fill="#c8c8c8" opacity="0.55"/>
<ellipse cx="175.9" cy="76.9" rx="5.1" ry="3.6" fill="#c4c4c4" opacity="0.55"/>
<ellipse cx="181.4" cy="98.2" rx="6.4" ry="6.4" fill="#9a9a9a" opacity="0.55"/>
<ellipse cx="173.1" cy="10.8" rx="6.6" ry="5.8" fill="#a2a2a2" opacity="0.55"/>
<ellipse cx="182.1" cy="102.3" rx="5.3" ry="3.2" fill="#9a9a9a" opacity="0.55"/>
<ellipse cx="106.0" cy="38.1" rx="5.7" ry="4.6" fill="#c8c8c8" opacity="0.55"/>
<ellipse cx="93.6" cy="103.7" rx="3.5" ry="2.2" fill="#c8c8c8" opacity="0.55"/>
<ellipse cx="173.2" cy="12.6" rx="3.9" ry="2.5" fill="#9a9a9a" opacity="0.55"/>
<ellipse cx="106.0" cy="90.7" rx="6.7" ry="6.2" fill="#9a9a9a" opacity="0.55"/>
<ellipse cx="139.2" cy="67.1" rx="4.6" ry="4.2" fill="#a2a2a2" opacity="0.55"/>
<ellipse cx="116.2" cy="62.4" rx="4.7" ry="3.7" fill="#9a9a9a" opacity="0.55"/>
<ellipse cx="178.0" cy="89.0" rx="3.2" ry="2.0" fill="#c8c8c8" opacity="0.55"/>
<ellipse cx="190.3" cy="97.4" rx="3.3" ry="2.7" fill="#c4c4c4" opacity="0.55"/>
<ellipse cx="104.5" cy="13.7" rx="4.5" ry="3.4" fill="#c4c4c4" opacity="0.55"/>
<ellipse cx="125.9" cy="26.4" rx="4.3" ry="2.8" fill="#9a9a9a" opacity="0.55"/>
<ellipse cx="163.2" cy="46.7" rx="3.3" ry="2.2" fill="#c4c4c4" opacity="0.55"/>
<ellipse cx="136.4" cy="75.6" rx="5.2" ry="4.4" fill="#9a9a9a" opacity="0.55"/>
<ellipse cx="153.4" cy="52.2" rx="4.5" ry="3.6" fill="#c4c4c4" opacity="0.55"/>
<ellipse cx="132.2" cy="80.3" rx="4.8" ry="3.4" fill="#c4c4c4" opacity="0.55"/>
<ellipse cx="161.0" cy="13.7" rx="4.7" ry="3.6" fill="#9a9a9a" opacity="0.55"/>
<ellipse cx="186.3" cy="46.0" rx="6.6" ry="6.0" fill="#c4c4c4" opacity="0.55"/>
<ellipse cx="100.8" cy="79.9" rx="6.8" ry="6.0" fill="#c8c8c8" opacity="0.55"/>
<ellipse cx="158.1" cy="84.5" rx="5.3" ry="3.4" fill="#9a9a9a" opacity="0.55"/>
<ellipse cx="137.7" cy="31.2" rx="4.6" ry="3.7" fill="#9a9a9a" opacity="0.55"/>
<ellipse cx="157.2" cy="46.2" rx="6.3" ry="4.6" fill="#9a9a9a" opacity="0.55"/>
<ellipse cx="90.7" cy="18.3" rx="4.9" ry="4.3" fill="#c4c4c4" opacity="0.55"/>
<ellipse cx="148.8" cy="91.5" rx="3.1" ry="2.9" fill="#a2a2a2" opacity="0.55"/>
<ellipse cx="99.2" cy="86.1" rx="6.7" ry="4.2" fill="#c4c4c4" opacity="0.55"/>
<ellipse cx="179.3" cy="25.3" rx="3.3" ry="3.3" fill="#a2a2a2" opacity="0.55"/>
<ellipse cx="135.7" cy="80.9" rx="6.8" ry="4.7" fill="#c8c8c8" opacity="0.55"/>
<ellipse cx="186.6" cy="65.6" rx="6.9" ry="5.1" fill="#a2a2a2" opacity="0.55"/>
<ellipse cx="190.2" cy="50.2" rx="6.0" ry="4.0" fill="#c8c8c8" opacity="0.55"/>
<ellipse cx="104.4" cy="48.9" rx="6.6" ry="4.4" fill="#c8c8c8" opacity="0.55"/>
<ellipse cx="166.6" cy="104.1" rx="5.1" ry="3.9" fill="#a2a2a2" opacity="0.55"/>
<ellipse cx="102.3" cy="86.5" rx="3.6" ry="2.9" fill="#a2a2a2" opacity="0.55"/>
<ellipse cx="177.4" cy="63.6" rx="6.1" ry="5.3" fill="#c8c8c8" opacity="0.55"/>
<ellipse cx="150.5" cy="68.5" rx="6.9" ry="6.6" fill="#c4c4c4" opacity="0.55"/>
<ellipse cx="90.4" cy="57.3" rx="4.5" ry="3.0" fill="#c4c4c4" opacity="0.55"/>
<ellipse cx="113.1" cy="57.6" rx="6.5" ry="5.0" fill="#c8c8c8" opacity="0.55"/>
<ellipse cx="161.7" cy="28.0" rx="5.3" ry="5.1" fill="#9a9a9a" opacity="0.55"/>
<ellipse cx="138.5" cy="83.1" rx="6.4" ry="4.9" fill="#9a9a9a" opacity="0.55"/>
<ellipse cx="137.1" cy="30.6" rx="3.9" ry="3.5" fill="#9a9a9a" opacity="0.55"/>
<ellipse cx="188.7" cy="97.4" rx="4.0" ry="2.7" fill="#c4c4c4" opacity="0.55"/>
<ellipse cx="102.4" cy="72.5" rx="5.7" ry="3.5" fill="#c4c4c4" opacity="0.55"/>
<ellipse cx="105.8" cy="10.8" rx="3.7" ry="2.4" fill="#9a9a9a" opacity="0.55"/>
<ellipse cx="100.4" cy="34.3" rx="6.7" ry="4.1" fill="#c8c8c8" opacity="0.55"/>
<ellipse cx="148.9" cy="78.3" rx="3.0" ry="2.2" fill="#c8c8c8" opacity="0.55"/>
<ellipse cx="127.9" cy="14.3" rx="5.6" ry="5.0" fill="#c8c8c8" opacity="0.55"/>
<ellipse cx="129.0" cy="64.2" rx="3.5" ry="2.5" fill="#c8c8c8" opacity="0.55"/>
<ellipse cx="99.8" cy="100.9" rx="6.6" ry="4.2" fill="#c4c4c4" opacity="0.55"/>
<ellipse cx="159.2" cy="45.4" rx="4.8" ry="4.2" fill="#c4c4c4" opacity="0.55"/>
<ellipse cx="99.3" cy="107.1" rx="4.4" ry="3.6" fill="#9a9a9a" opacity="0.55"/>
</g>
<path d="M87 0 L84 60 L81 113" stroke="#e8e8e8" stroke-width="5" fill="none"/>
<rect x="0" y="0" width="264" height="6" fill="#063806"/>
<rect x="85" y="0" width="93" height="6" fill="#1ed21e"/>
<rect x="0" y="0" width="264" height="1" fill="#5a8a5a"/>
<rect x="0" y="91" width="264" height="2" fill="#e81010"/>
<rect x="0" y="113" width="264" height="27" fill="#052e05"/>
<polygon points="80,113 198,113 201,140 71,140" fill="#16d016"/>
<path d="M41 113 L78 113 Q73 117 61 119 Q50 117 46 113 Z" fill="#12a012"/>
<path d="M46 140 Q53 129 78 129 L80 140 Z" fill="#12c012"/>
<rect x="0" y="113" width="1" height="27" fill="#207020"/>
</svg>
<div class="t" style="left:625.5px;top:92.0px;font-size:10px;color:#c0c4c8">um</div>
<div class="a" style="left:618px;top:109.5px;width:6px;height:1px;background:#a0a0a0"></div>
<div class="t" style="left:625px;top:104.5px;font-size:10px;color:#c0c4c8">2500</div>
<div class="a" style="left:618px;top:135.5px;width:6px;height:1px;background:#a0a0a0"></div>
<div class="t" style="left:625px;top:130.5px;font-size:10px;color:#c0c4c8">2000</div>
<div class="a" style="left:618px;top:162.0px;width:6px;height:1px;background:#a0a0a0"></div>
<div class="t" style="left:625px;top:157.0px;font-size:10px;color:#c0c4c8">1500</div>
<div class="a" style="left:618px;top:188.5px;width:6px;height:1px;background:#a0a0a0"></div>
<div class="t" style="left:625px;top:183.5px;font-size:10px;color:#c0c4c8">1000</div>
<div class="a" style="left:618px;top:216.0px;width:6px;height:1px;background:#a0a0a0"></div>
<div class="t" style="left:625px;top:211.0px;font-size:10px;color:#c0c4c8">500</div>
<!--/SHAD-->
<div class="a" style="left:655px;top:86px;width:1px;height:148px;background:#a0a0a0"></div>
<div class="a" style="left:656px;top:86px;width:1px;height:148px;background:#fff"></div>

<!-- ===== panel 3: Dataset ===== -->
<div class="a" style="left:657px;top:88px;width:16px;height:145px;background:linear-gradient(90deg,#d3e0f1,#dbe6f4)"></div>
<svg style="left:661px;top:92px" width="8" height="7"><path d="M1 1 L7 6 M7 1 L1 6" stroke="#000" stroke-width="1.6"/></svg>
<div class="t" style="left:659px;top:229px;font-size:12px;transform:rotate(-90deg) scaleX(.917);transform-origin:0 0">Dataset</div>
<div class="a" style="left:673px;top:88px;width:409px;height:145px;background:#f0f0f0;border:1px solid #c4c4c4"></div>
<div class="a" style="left:673px;top:110px;width:409px;height:121px;border:1px solid #a8a8a8;background:#f5f5f5"></div>


<!-- tabs -->
<svg style="left:0;top:0" width="0" height="0"><defs>
<symbol id="icmeas" viewBox="0 0 16 16"><rect x="0.5" y="0.5" width="15" height="15" rx="1.5" fill="#fff" stroke="#000"/><path d="M1 8.5 L3 8.5 M8 8.5 L15 8.5" stroke="#10a010" stroke-width="1"/><path d="M5.5 3 L5.5 12.5 M3 5 Q3.5 8 5.5 9 Q7.5 8 8 5" stroke="#f00000" stroke-width="1.5" fill="none"/><rect x="11" y="3" width="2" height="2" fill="#0000f0"/><rect x="9" y="10" width="3" height="1.5" fill="#30e030"/></symbol>
</defs></svg>
<div class="a" style="left:676px;top:92px;width:95px;height:19px;border:1px solid #a8a8a8;border-bottom:none;background:linear-gradient(180deg,#f6f6f6,#e0e0e0)"></div>
<svg style="left:682px;top:93px" width="17" height="16"><rect x="0.5" y="0.5" width="16" height="15" rx="1.5" fill="#30e0e8" stroke="#000"/><rect x="1" y="10" width="15" height="5" fill="#a89a58"/><rect x="1" y="9" width="15" height="1.5" fill="#c03030"/><circle cx="13" cy="4" r="2" fill="#f0f000"/><path d="M7 13 L7 3 M4 8 L4 6 M4 8 L10 8 L10 5" stroke="#00c000" stroke-width="2.4" fill="none"/></svg>
<div class="t" style="left:705px;top:95px;font-size:12px;transform:scaleX(.917);transform-origin:0 0">Raw images</div>
<div class="a" style="left:771px;top:92px;width:110px;height:19px;border:1px solid #a8a8a8;border-left:none;border-bottom:none;background:linear-gradient(180deg,#f6f6f6,#e0e0e0)"></div>
<svg style="left:776px;top:93px" width="17" height="16"><rect x="0.5" y="0.5" width="16" height="15" rx="2" fill="#777" stroke="#333"/><path d="M6 13 L6 5 M3 9 L6 9 L9 6 M10 10 L14 10 M11 6 L14 4" stroke="#fff" stroke-width="1.5" fill="none"/></svg>
<div class="t" style="left:800px;top:95px;font-size:12px;transform:scaleX(.917);transform-origin:0 0">Binary selection</div>
<div class="a" style="left:881px;top:89px;width:104px;height:23px;border:1px solid #a8a8a8;border-bottom:none;background:#fff"></div>
<svg style="left:887px;top:91px" width="16" height="16"><use href="#icmeas"/></svg>
<div class="t" style="left:911px;top:93px;font-size:12px;transform:scaleX(.917);transform-origin:0 0">Measurement</div>
<!-- slider left -->
<div class="a" style="left:679px;top:117px;width:4px;height:106px;border:1px solid #b8b8b8;border-right-color:#fff;border-bottom-color:#fff;background:#e4e4e4"></div>
<div class="a" style="left:676px;top:196px;width:12px;height:7px;border:1px solid #7a7a7a;border-radius:2px 4px 4px 2px;background:linear-gradient(180deg,#fafafa,#dcdcdc)"></div>
<!-- listview -->
<div class="a" style="left:695px;top:111px;width:333px;height:118px;background:#fff;border:1px solid #828790"></div>
<div class="a" style="left:696px;top:112px;width:314px;height:23px;background:linear-gradient(180deg,#fff 0,#fff 40%,#f2f3f5 45%,#f0f1f3 100%);border-bottom:1px solid #d5d5d5"></div>
<div class="a" style="left:895px;top:112px;width:1px;height:23px;background:#e2e3e5"></div>
<div class="t" style="left:703px;top:119px;font-size:12px;transform:scaleX(.917);transform-origin:0 0">File name</div>
<div class="t" style="left:902px;top:119px;font-size:12px;transform:scaleX(.917);transform-origin:0 0">Z-position</div>
<svg style="left:701px;top:138.0px" width="16" height="16"><use href="#icmeas"/></svg>
<div class="t" style="left:719px;top:140.0px;font-size:12px;transform:scaleX(.917);transform-origin:0 0">fem_9_2p7___voi_0434.bmp</div>
<div class="t" style="left:902px;top:140.0px;font-size:12px;transform:scaleX(.917);transform-origin:0 0;letter-spacing:-0.15px">434 line (1.205 mm)</div>
<svg style="left:701px;top:155.5px" width="16" height="16"><use href="#icmeas"/></svg>
<div class="t" style="left:719px;top:157.5px;font-size:12px;transform:scaleX(.917);transform-origin:0 0">fem_9_2p7___voi_0433.bmp</div>
<div class="t" style="left:902px;top:157.5px;font-size:12px;transform:scaleX(.917);transform-origin:0 0;letter-spacing:-0.15px">433 line (1.202 mm)</div>
<svg style="left:701px;top:173.0px" width="16" height="16"><use href="#icmeas"/></svg>
<div class="t" style="left:719px;top:175.0px;font-size:12px;transform:scaleX(.917);transform-origin:0 0">fem_9_2p7___voi_0432.bmp</div>
<div class="t" style="left:902px;top:175.0px;font-size:12px;transform:scaleX(.917);transform-origin:0 0;letter-spacing:-0.15px">432 line (1.199 mm)</div>
<svg style="left:701px;top:190.5px" width="16" height="16"><use href="#icmeas"/></svg>
<div class="t" style="left:719px;top:192.5px;font-size:12px;transform:scaleX(.917);transform-origin:0 0">fem_9_2p7___voi_0431.bmp</div>
<div class="t" style="left:902px;top:192.5px;font-size:12px;transform:scaleX(.917);transform-origin:0 0;letter-spacing:-0.15px">431 line (1.197 mm)</div>
<svg style="left:701px;top:206px" width="16" height="3"><rect x="0.5" y="0.5" width="15" height="4" fill="none" stroke="#000"/></svg>
<!-- v scrollbar -->
<div class="a" style="left:1010px;top:112px;width:17px;height:98px;background:#ececec"></div>
<svg style="left:1014px;top:118px" width="9" height="6"><path d="M0.5 4.5 L4.5 0.5 L8.5 4.5 Z" fill="#404040"/></svg>
<div class="a" style="left:1010px;top:166px;width:16px;height:16px;border:1px solid #a8a8a8;border-radius:2px;background:linear-gradient(90deg,#f4f4f4,#dcdcdc)"></div>
<svg style="left:1014px;top:197px" width="9" height="6"><path d="M0.5 0.5 L4.5 4.5 L8.5 0.5 Z" fill="#404040"/></svg>
<!-- h scrollbar -->
<div class="a" style="left:696px;top:210px;width:331px;height:18px;background:#ececec"></div>
<svg style="left:703px;top:214px" width="6" height="9"><path d="M4.5 0.5 L0.5 4.5 L4.5 8.5 Z" fill="#404040"/></svg>
<div class="a" style="left:715px;top:211px;width:242px;height:16px;border:1px solid #a8a8a8;border-radius:2px;background:linear-gradient(180deg,#f4f4f4,#dadada)"></div>
<div class="a" style="left:832px;top:216px;width:7px;height:6px;background:repeating-linear-gradient(90deg,#555 0,#555 1px,transparent 1px,transparent 3px)"></div>
<svg style="left:998px;top:214px" width="6" height="9"><path d="M0.5 0.5 L4.5 4.5 L0.5 8.5 Z" fill="#404040"/></svg>
<!-- right sliders -->
<div class="a" style="left:1034px;top:117px;width:4px;height:106px;border:1px solid #b8b8b8;border-right-color:#fff;border-bottom-color:#fff;background:#e4e4e4"></div>
<div class="a" style="left:1031px;top:215px;width:12px;height:8px;border:1px solid #7a7a7a;border-radius:2px 4px 4px 2px;background:linear-gradient(180deg,#fafafa,#dcdcdc)"></div>
<div class="a" style="left:1046px;top:112px;width:18px;height:116px;background:#fff"></div>
<div class="a" style="left:1051px;top:118px;width:9px;height:104px;background:#000"></div>
<div class="a" style="left:1070px;top:117px;width:4px;height:106px;border:1px solid #b8b8b8;border-right-color:#fff;border-bottom-color:#fff;background:#e4e4e4"></div>
<div class="a" style="left:1066px;top:117px;width:13px;height:8px;border:1px solid #7a7a7a;border-radius:4px 4px 2px 2px;background:linear-gradient(180deg,#fafafa,#dcdcdc)"></div>

<!-- main image -->
<div class="a" style="left:8px;top:233px;width:1079px;height:3px;background:#fbfbfb"></div>
<div class="a" style="left:8px;top:236px;width:1079px;height:2px;background:linear-gradient(180deg,#dcdcdc,#a8a8a8)"></div>
<!--BLOBS-->
<svg style="left:10px;top:238px;overflow:hidden" width="527" height="530"><rect width="527" height="530" fill="#000"/>
<polygon points="267.30,56.60 272.80,49.30 278.30,53.90 289.20,51.10 298.40,42.90 323.90,41.60 336.70,44.70 347.70,50.20 367.80,57.50 380.50,59.40 391.50,70.30 406.10,78.50 415.30,88.60 420.70,104.10 428.00,105.60 431.70,113.20 432.60,127.90 429.00,137.00 424.40,137.40 420.70,127.90 420.40,113.20 417.10,100.50 409.80,89.50 391.50,75.80 376.90,66.70 362.30,61.20 345.80,56.60 333.10,53.90 318.40,53.90 296.50,54.80 283.70,55.70 274.60,59.40 267.30,58.10" fill="#0433e0" stroke="#0433e0" stroke-width="1.4" stroke-linejoin="round"/>
<polygon points="358.60,11.90 364.10,11.30 376.90,14.60 380.50,12.40 387.90,14.60 402.50,17.40 413.40,15.50 426.20,17.40 421.60,23.70 422.60,32.00 433.50,38.40 439.90,40.20 438.10,46.60 435.30,54.80 430.80,55.70 426.20,45.70 417.10,37.40 402.50,33.80 398.80,29.20 395.20,24.70 387.90,20.10 382.40,18.30 378.70,21.60 367.80,21.00 361.40,18.30 358.60,14.60" fill="#0433e0" stroke="#0433e0" stroke-width="1.4" stroke-linejoin="round"/>
<polygon points="322.00,11.00 333.00,5.00 333.50,6.50 323.00,12.50" fill="#e0108c" stroke="#e0108c" stroke-width="0.6" stroke-linejoin="round" opacity="0.75"/>
<polygon points="442.60,74.90 446.30,74.90 446.30,77.60 442.60,77.60" fill="#f26000" stroke="#f26000" stroke-width="1.4" stroke-linejoin="round"/>
<polygon points="352.50,91.30 355.00,91.80 354.50,98.00 351.30,99.50 351.00,95.00" fill="#f26000" stroke="#f26000" stroke-width="1.4" stroke-linejoin="round"/>
<polygon points="430.50,101.60 432.70,101.60 432.70,103.80 430.50,103.80" fill="#e0108c" stroke="#e0108c" stroke-width="0.6" stroke-linejoin="round" opacity="0.75"/>
<polygon points="445.25,98.25 451.50,99.50 460.25,108.25 459.00,115.75 449.00,107.00 446.00,102.00" fill="#f2dc00" stroke="#f2dc00" stroke-width="1.4" stroke-linejoin="round"/>
<polygon points="272.75,142.00 285.25,127.00 289.00,132.00 296.50,152.00 305.25,158.25 301.50,162.00 289.00,152.00 274.00,143.25" fill="#68aa02" stroke="#68aa02" stroke-width="1.4" stroke-linejoin="round"/>
<polygon points="350.25,118.25 356.50,118.25 362.75,139.50 371.50,152.00 366.50,155.75 357.75,154.50 359.00,144.50 352.75,129.50" fill="#68aa02" stroke="#68aa02" stroke-width="1.4" stroke-linejoin="round"/>
<polygon points="260.00,106.00 265.00,108.00 267.30,112.00 264.00,118.70 260.00,117.00" fill="#0433e0" stroke="#0433e0" stroke-width="1.4" stroke-linejoin="round"/>
<polygon points="309.00,172.00 319.00,169.50 346.50,168.25 351.50,172.00 344.00,178.25 339.00,184.50 324.00,182.00 310.25,178.25" fill="#68aa02" stroke="#68aa02" stroke-width="1.4" stroke-linejoin="round"/>
<polygon points="286.00,189.00 292.00,191.00 292.75,198.00 284.00,208.00 281.50,202.00" fill="#68aa02" stroke="#68aa02" stroke-width="1.4" stroke-linejoin="round"/>
<polygon points="375.25,158.25 379.00,157.00 389.00,172.00 404.00,179.50 409.00,187.00 407.75,194.00 406.50,203.00 414.00,223.00 424.00,238.00 439.00,241.75 456.50,239.25 469.00,228.00 470.25,215.50 464.00,205.50 469.00,193.00 471.50,178.00 472.75,174.50 475.25,182.00 474.00,208.00 484.00,215.50 491.50,220.50 497.75,231.75 489.00,234.00 479.00,240.50 464.00,249.25 449.00,253.00 429.00,251.75 416.50,253.00 404.00,263.00 394.00,275.50 391.50,285.50 384.00,285.50 380.25,279.25 386.50,274.25 399.00,263.00 414.00,248.00 409.00,235.50 399.00,213.00 394.00,193.00 386.00,180.00 378.00,167.00" fill="#00c4e8" stroke="#00c4e8" stroke-width="1.4" stroke-linejoin="round"/>
<polygon points="427.00,174.00 430.00,173.00 434.00,187.00 434.00,203.00 430.00,205.00 428.00,192.00" fill="#68aa02" stroke="#68aa02" stroke-width="1.4" stroke-linejoin="round"/>
<polygon points="215.00,205.50 225.00,203.00 235.00,206.75 242.50,215.50 252.50,218.00 263.75,218.00 275.25,220.50 263.75,223.00 247.50,221.75 237.50,218.00 227.50,214.25 216.25,211.75" fill="#0433e0" stroke="#0433e0" stroke-width="1.4" stroke-linejoin="round"/>
<polygon points="331.50,218.00 339.00,216.75 340.25,223.00 335.25,223.50" fill="#f2dc00" stroke="#f2dc00" stroke-width="1.4" stroke-linejoin="round"/>
<polygon points="299.00,223.00 305.25,226.75 310.25,231.75 316.50,228.00 317.75,238.00 311.50,243.00 301.50,230.50" fill="#68aa02" stroke="#68aa02" stroke-width="1.4" stroke-linejoin="round"/>
<polygon points="344.00,230.50 351.50,235.50 356.50,244.25 356.50,253.00 349.00,253.00 344.00,245.50" fill="#68aa02" stroke="#68aa02" stroke-width="1.4" stroke-linejoin="round"/>
<polygon points="326.50,268.00 331.50,266.75 330.25,274.25 325.25,274.25" fill="#f2dc00" stroke="#f2dc00" stroke-width="1.4" stroke-linejoin="round"/>
<polygon points="290.25,314.25 297.75,313.00 299.00,318.00 291.50,319.25" fill="#f2dc00" stroke="#f2dc00" stroke-width="1.4" stroke-linejoin="round"/>
<polygon points="354.00,323.00 360.25,321.75 362.75,326.75 359.00,334.25 354.50,331.75" fill="#f2dc00" stroke="#f2dc00" stroke-width="1.4" stroke-linejoin="round"/>
<polygon points="336.50,369.25 346.50,366.75 359.00,350.50 374.00,341.75 376.50,345.50 364.00,358.00 354.00,371.75 339.00,373.00" fill="#68aa02" stroke="#68aa02" stroke-width="1.4" stroke-linejoin="round"/>
<polygon points="272.75,363.00 277.75,361.75 277.75,368.00 272.75,368.50" fill="#f2dc00" stroke="#f2dc00" stroke-width="1.4" stroke-linejoin="round"/>
<polygon points="437.75,284.25 449.00,275.50 457.75,275.50 462.75,280.50 456.50,285.50 446.50,288.00 439.00,289.25" fill="#68aa02" stroke="#68aa02" stroke-width="1.4" stroke-linejoin="round"/>
<polygon points="415.25,304.25 417.75,305.50 419.00,315.50 416.00,314.25" fill="#f2dc00" stroke="#f2dc00" stroke-width="1.4" stroke-linejoin="round"/>
<polygon points="466.50,294.25 474.00,295.50 479.00,305.50 476.50,318.00 469.00,328.00 454.00,340.50 444.00,349.25 426.50,351.75 417.75,348.00 414.00,340.50 416.50,331.75 424.00,326.75 436.50,329.25 446.50,330.50 459.00,320.50 464.00,310.50 465.25,298.00" fill="#0428da" stroke="#0428da" stroke-width="1.4" stroke-linejoin="round"/>
<polygon points="85.00,198.00 101.25,185.50 103.75,195.50 115.00,208.00 107.50,215.50 100.00,223.00 90.00,223.00 84.50,213.00" fill="#0433e0" stroke="#0433e0" stroke-width="1.4" stroke-linejoin="round"/>
<polygon points="135.00,225.50 140.00,221.75 143.75,226.75 140.00,235.50 136.25,230.50" fill="#f2dc00" stroke="#f2dc00" stroke-width="1.4" stroke-linejoin="round"/>
<polygon points="96.00,235.50 100.00,235.50 100.00,237.50 96.00,237.50" fill="#f26000" stroke="#f26000" stroke-width="1.4" stroke-linejoin="round"/>
<polygon points="122.50,251.75 131.25,251.75 137.50,258.00 137.50,266.75 128.75,266.75 122.50,258.00" fill="#68aa02" stroke="#68aa02" stroke-width="1.4" stroke-linejoin="round"/>
<polygon points="201.25,255.50 208.75,254.25 207.50,259.25 203.75,259.25" fill="#f26000" stroke="#f26000" stroke-width="1.4" stroke-linejoin="round"/>
<polygon points="34.50,273.00 36.25,273.00 35.50,279.25 32.50,279.00" fill="#f26000" stroke="#f26000" stroke-width="1.4" stroke-linejoin="round"/>
<polygon points="30.00,292.00 32.60,290.60 40.00,291.40 47.70,294.00 49.40,287.00 52.00,279.60 56.00,279.60 60.30,285.50 60.30,292.00 56.00,296.50 47.00,296.50 45.20,305.70 45.20,317.50 49.40,329.20 54.50,346.00 43.50,347.00 41.00,337.60 41.80,325.90 40.00,317.50 33.40,312.40 29.20,305.70" fill="#0433e0" stroke="#0433e0" stroke-width="1.4" stroke-linejoin="round"/>
<polygon points="163.75,290.50 171.25,289.25 176.25,294.25 170.00,299.25 165.00,298.00" fill="#f2dc00" stroke="#f2dc00" stroke-width="1.4" stroke-linejoin="round"/>
<polygon points="120.80,315.00 127.60,317.50 136.00,324.00 141.00,326.00 140.20,330.00 134.30,329.20 127.60,324.00 121.70,319.00" fill="#68aa02" stroke="#68aa02" stroke-width="1.4" stroke-linejoin="round"/>
<polygon points="216.25,314.25 222.50,310.50 226.25,318.00 217.50,319.25" fill="#f2dc00" stroke="#f2dc00" stroke-width="1.4" stroke-linejoin="round"/>
<polygon points="232.50,319.25 242.50,315.50 255.00,316.75 263.75,320.50 271.50,323.00 272.75,326.75 264.00,325.50 252.50,321.75 240.00,319.25" fill="#68aa02" stroke="#68aa02" stroke-width="1.4" stroke-linejoin="round"/>
<polygon points="196.25,341.75 202.50,335.50 207.00,339.25 202.50,343.00" fill="#f2dc00" stroke="#f2dc00" stroke-width="1.4" stroke-linejoin="round"/>
<polygon points="143.75,356.75 152.50,356.00 156.25,361.75 145.00,362.50" fill="#f2dc00" stroke="#f2dc00" stroke-width="1.4" stroke-linejoin="round"/>
<polygon points="84.70,351.00 94.00,362.80 99.00,373.00 112.40,378.00 120.80,378.00 120.80,391.40 112.40,396.50 94.00,394.80 83.90,391.40 75.50,399.00 87.20,386.40 86.40,373.00" fill="#0433e0" stroke="#0433e0" stroke-width="1.4" stroke-linejoin="round"/>
<polygon points="65.00,403.25 62.50,407.00 50.00,410.75 42.50,417.00 43.75,427.00 52.50,437.00 62.50,447.00 77.50,458.25 95.00,454.50 115.00,449.50 125.00,454.50 120.00,458.25 100.00,459.50 83.75,463.25 81.25,472.00 83.75,479.50 86.25,492.00 81.25,490.75 78.75,479.50 76.25,462.00 62.50,454.50 47.50,442.00 36.25,437.00 27.50,442.00 20.00,449.50 18.75,462.00 21.25,473.25 13.75,473.25 12.50,457.00 16.25,437.00 27.50,422.00 36.25,413.25 47.50,407.00" fill="#0433e0" stroke="#0433e0" stroke-width="1.4" stroke-linejoin="round"/>
<polygon points="18.75,475.75 22.50,478.00 22.50,480.75 19.50,479.00" fill="#f26000" stroke="#f26000" stroke-width="1.4" stroke-linejoin="round"/>
<polygon points="86.00,502.00 92.50,508.00 91.00,509.00 86.00,504.00" fill="#e0108c" stroke="#e0108c" stroke-width="0.6" stroke-linejoin="round" opacity="0.75"/>
<polygon points="126.25,405.75 131.25,408.25 136.25,414.50 132.50,417.00 127.50,412.00" fill="#f2dc00" stroke="#f2dc00" stroke-width="1.4" stroke-linejoin="round"/>
<polygon points="220.00,412.00 230.00,407.00 246.25,403.25 247.50,409.50 236.25,417.00 223.75,419.50" fill="#68aa02" stroke="#68aa02" stroke-width="1.4" stroke-linejoin="round"/>
<polygon points="197.50,437.00 202.50,435.75 204.50,444.50 201.25,454.50 197.50,447.00" fill="#f2dc00" stroke="#f2dc00" stroke-width="1.4" stroke-linejoin="round"/>
<polygon points="146.25,469.50 148.75,469.50 147.50,497.00 161.25,510.75 150.00,512.00 125.00,512.00 100.00,510.75 97.50,507.00 115.00,508.25 142.50,507.00 143.75,497.00" fill="#68aa02" stroke="#68aa02" stroke-width="1.4" stroke-linejoin="round"/>
<polygon points="196.25,513.25 207.50,492.00 217.50,469.50 225.00,464.50 240.00,458.25 248.75,457.00 250.00,462.00 242.50,467.00 230.00,472.00 222.50,477.00 216.25,492.00 208.75,515.75" fill="#0433e0" stroke="#0433e0" stroke-width="1.4" stroke-linejoin="round"/>
<polygon points="221.25,519.50 230.00,518.25 245.00,520.75 240.00,522.00 222.50,521.50" fill="#f2dc00" stroke="#f2dc00" stroke-width="1.4" stroke-linejoin="round"/>
<polygon points="359.00,398.25 375.25,400.75 374.00,409.50 369.00,407.00 359.00,409.50 350.25,412.00 334.00,422.00 321.50,429.50 314.00,437.00 307.75,449.50 304.00,469.50 311.50,477.00 331.50,475.75 354.00,472.00 351.50,478.25 339.00,484.50 336.50,492.00 296.50,492.00 289.00,504.50 289.00,522.00 256.00,522.00 264.00,518.25 279.00,509.50 284.00,497.00 296.50,472.00 301.50,457.00 307.75,439.50 319.00,427.00 334.00,413.25 346.50,407.00" fill="#00c4e8" stroke="#00c4e8" stroke-width="1.4" stroke-linejoin="round"/>
<polygon points="339.00,505.75 344.00,504.50 350.25,512.00 344.00,514.50 337.75,514.50" fill="#f2dc00" stroke="#f2dc00" stroke-width="1.4" stroke-linejoin="round"/>
<polygon points="312.75,523.00 321.50,523.00 321.50,524.50 312.75,524.50" fill="#f26000" stroke="#f26000" stroke-width="1.4" stroke-linejoin="round"/>
<polygon points="166.25,158.75 175.00,158.75 186.25,167.50 186.25,173.75 180.00,175.00 170.00,167.50" fill="#68aa02" stroke="#68aa02" stroke-width="1.4" stroke-linejoin="round"/>
<polygon points="216.25,151.25 222.50,151.25 222.50,153.75 216.25,153.75" fill="#f26000" stroke="#f26000" stroke-width="1.4" stroke-linejoin="round"/>
<polygon points="223.75,155.00 235.00,152.50 241.25,156.25 237.50,160.00 227.50,156.25" fill="#f2dc00" stroke="#f2dc00" stroke-width="1.4" stroke-linejoin="round"/>
<polygon points="131.25,167.50 140.00,160.00 140.50,161.00 132.00,168.50" fill="#e0108c" stroke="#e0108c" stroke-width="0.6" stroke-linejoin="round" opacity="0.75"/>
<polygon points="228.75,110.00 236.25,107.50 252.50,105.00 263.75,107.50 263.75,118.75 250.00,120.00 233.75,121.25 228.75,116.25" fill="#0433e0" stroke="#0433e0" stroke-width="1.4" stroke-linejoin="round"/>
<rect x="0" y="0" width="1" height="530" fill="#2f6a1f"/><rect x="526" y="0" width="1" height="530" fill="#2f6a1f"/>
</svg>
<!--/BLOBS-->


<!-- ===== Analysis panel ===== -->
<div class="a" style="left:537px;top:238px;width:2px;height:530px;background:linear-gradient(90deg,#18a018,#0c600c)"></div>
<div class="a" style="left:543px;top:238px;width:541px;height:470px;border-left:1px solid #a0a0a0;background:#f0f0f0"></div>
<div class="a" style="left:544px;top:238px;width:540px;height:16px;background:linear-gradient(180deg,#dce7f4,#d3e0f1)"></div>
<div class="a" style="left:544px;top:254px;width:540px;height:1px;background:#b8c4d4"></div>
<div class="t" style="left:549px;top:240px;font-size:12px;transform:scaleX(.917);transform-origin:0 0">Analysis</div>
<svg style="left:1071px;top:243px" width="8" height="7"><path d="M1 1 L7 6 M7 1 L1 6" stroke="#000" stroke-width="1.6"/></svg>
<!-- toolbar -->
<svg style="left:552px;top:258px" width="18" height="16"><rect x="0.5" y="0.5" width="11" height="11" fill="#fff" stroke="#000"/><path d="M4 9 L4 4 M2 3 L4 5 L6 3" stroke="#e00" stroke-width="1.2" fill="none"/><circle cx="9" cy="3" r="1" fill="#00f"/><path d="M3 15.5 L17.5 1.5 L17.5 15.5 Z" fill="#e8e020" stroke="#000"/><path d="M9 13 L14.5 8 L14.5 13 Z" fill="#f0f0f0" stroke="#000"/></svg>
<svg style="left:585px;top:258px" width="18" height="16"><path d="M3 15.5 L17.5 1.5 L17.5 15.5 Z" fill="#e8e020" stroke="#000"/><path d="M9 13 L14.5 8 L14.5 13 Z" fill="#f0f0f0" stroke="#000"/><circle cx="2.5" cy="2.5" r="2" fill="#c020c0"/><circle cx="9" cy="4" r="2" fill="#c020c0"/><circle cx="5.5" cy="8.5" r="3" fill="#a010b0"/></svg>
<svg style="left:618px;top:258px" width="18" height="16"><path d="M3 15.5 L17.5 1.5 L17.5 15.5 Z" fill="#e8e020" stroke="#000"/><path d="M9 13 L14.5 8 L14.5 13 Z" fill="#f0f0f0" stroke="#000"/><circle cx="6.5" cy="6" r="5.5" fill="#b018c0"/><circle cx="5" cy="4" r="2" fill="#f0c0f8"/></svg>
<svg style="left:651px;top:258px" width="18" height="16"><path d="M1 3 L12 3 M1 5 L12 5 M1 7 L7 7 M1 9 L7 9 M1 11 L7 11" stroke="#000" stroke-width="1"/><path d="M2 2 L5 0.5 L15 0.5" stroke="#000" fill="none"/><rect x="7.5" y="6.5" width="10" height="9" fill="#3a3a0a" stroke="#000"/><rect x="9.5" y="7" width="6" height="3" fill="#fff"/><rect x="11" y="12" width="2" height="2" fill="#fff"/></svg>
<svg style="left:683px;top:258px" width="22" height="17"><rect x="1" y="8" width="3" height="6" fill="#00f" stroke="#000" stroke-width=".6"/><rect x="4" y="2" width="3" height="12" fill="#ff0" stroke="#000" stroke-width=".6"/><rect x="7" y="6" width="3" height="8" fill="#e00" stroke="#000" stroke-width=".6"/><rect x="11.5" y="7.5" width="10" height="9" fill="#3a3a0a" stroke="#000"/><rect x="13.5" y="8" width="6" height="3" fill="#fff"/><rect x="15" y="13" width="2" height="2" fill="#fff"/></svg>
<svg style="left:714px;top:258px" width="23" height="16"><text x="0" y="8" font-family="Liberation Sans" font-size="9" fill="#000">$</text><rect x="7" y="8" width="4" height="7" fill="#00f" stroke="#000" stroke-width=".6"/><rect x="11" y="3" width="4" height="12" fill="#ff0" stroke="#000" stroke-width=".6"/><rect x="15" y="7" width="4" height="8" fill="#e00" stroke="#000" stroke-width=".6"/><path d="M6 15.5 L22 15.5 M6.5 2 L6.5 15" stroke="#000"/></svg>
<div class="a" style="left:743px;top:256px;width:33px;height:23px;border:2px solid #a0a0a0;border-radius:4px;background:#e6e6e6;box-shadow:inset 0 0 0 1px #fbfbfb"></div>
<svg style="left:748px;top:261px" width="12" height="13"><path d="M1 6 L4 11 L11 0" stroke="#900000" stroke-width="1.8" fill="none"/></svg>
<div class="t" style="left:759px;top:262px;font-size:10.5px;transform:scaleX(.85);transform-origin:0 0">123</div>
<svg style="left:781px;top:259px" width="24" height="17"><path d="M3 1 L3 12 M1 12 L22 12 M19 10 L22 12 L19 14 M3 14 L3 16 M7 14 L7 16 M11 14 L11 16 M15 14 L15 16" stroke="#d82020" stroke-width="1" fill="none"/><path d="M4 3 L10 3 L10 11 M10 5 L14 5 L14 11 M14 7 L18 7 L18 11" stroke="#c0c0c0" fill="none"/></svg>
<!-- tabs -->
<div class="a" style="left:545px;top:302px;width:535px;height:162px;border:1px solid #a0a0a0;background:#fff"></div>
<div class="a" style="left:643px;top:283px;width:104px;height:20px;border:1px solid #a0a0a0;border-left:none;border-bottom:none;background:linear-gradient(180deg,#f6f6f6,#e2e2e2)"></div>
<div class="a" style="left:747px;top:283px;width:81px;height:20px;border:1px solid #a0a0a0;border-left:none;border-bottom:none;background:linear-gradient(180deg,#f6f6f6,#e2e2e2)"></div>
<div class="a" style="left:828px;top:283px;width:58px;height:20px;border:1px solid #a0a0a0;border-left:none;border-bottom:none;background:linear-gradient(180deg,#f6f6f6,#e2e2e2)"></div>
<div class="a" style="left:886px;top:283px;width:88px;height:20px;border:1px solid #a0a0a0;border-left:none;border-bottom:none;background:linear-gradient(180deg,#f6f6f6,#e2e2e2)"></div>
<div class="a" style="left:974px;top:283px;width:72px;height:20px;border:1px solid #a0a0a0;border-left:none;border-bottom:none;background:linear-gradient(180deg,#f6f6f6,#e2e2e2)"></div>
<div class="a" style="left:545px;top:280px;width:98px;height:23px;border:1px solid #a0a0a0;border-bottom:none;background:#fff"></div>
<svg style="left:554px;top:284px" width="16" height="13"><rect x="0" y="7" width="2" height="2" fill="#080"/><rect x="0" y="10" width="3" height="3" fill="#080"/><path d="M6 2 L8 4 L6 6 L4 4 Z" fill="#00f"/><rect x="4" y="8" width="4" height="5" fill="#00f"/><circle cx="12.5" cy="2.5" r="2.5" fill="#f00"/><rect x="10" y="7" width="5" height="6" fill="#f00"/></svg>
<div class="t" style="left:576px;top:285px;font-size:12px;transform:scaleX(.917);transform-origin:0 0">Size (ECDa)</div>
<svg style="left:648px;top:285px" width="15" height="14"><ellipse cx="7.5" cy="4.5" rx="6.5" ry="4" fill="#10e010" stroke="#000"/><path d="M1 5 L1 11 M14 5 L14 11 M1 11 L14 11 M3 9.5 L1 11 L3 12.5 M12 9.5 L14 11 L12 12.5" stroke="#000" fill="none"/></svg>
<div class="t" style="left:670px;top:287px;font-size:12px;transform:scaleX(.917);transform-origin:0 0">Major diameter</div>
<svg style="left:753px;top:285px" width="16" height="14"><circle cx="2" cy="7" r="1.5" fill="none" stroke="#080"/><rect x="0.5" y="10.5" width="3" height="3" fill="none" stroke="#080"/><circle cx="7" cy="4" r="1.8" fill="none" stroke="#00f"/><rect x="5" y="9" width="4" height="4.5" fill="none" stroke="#00f"/><circle cx="13" cy="3" r="2.5" fill="none" stroke="#f00"/><rect x="10.5" y="8" width="5" height="5.5" fill="none" stroke="#f00"/></svg>
<div class="t" style="left:776px;top:287px;font-size:12px;transform:scaleX(.917);transform-origin:0 0">Perimeter</div>
<svg style="left:834px;top:285px" width="16" height="14"><path d="M1 1 L1 5 M1 7 L1 12" stroke="#080" stroke-width="1.5"/><path d="M7 4 L11 8 L7 12 L3 8 Z" fill="#00f"/><rect x="4" y="0" width="3" height="3" fill="#00f"/><circle cx="13.5" cy="4" r="2.5" fill="#f00"/><circle cx="13" cy="11" r="2" fill="#f00"/></svg>
<div class="t" style="left:857px;top:287px;font-size:12px;transform:scaleX(.917);transform-origin:0 0">Form</div>
<svg style="left:891px;top:284px" width="16" height="16"><circle cx="8" cy="8" r="7" fill="#fff" stroke="#000" stroke-width="1.3"/><path d="M6 1 L8 8 L10 15" stroke="#000" fill="none"/><path d="M6 3 L10 10 L7 9 Z" fill="#00f"/><path d="M8 8 L10 14 L10 10 Z" fill="#e00"/></svg>
<div class="t" style="left:915px;top:287px;font-size:12px;transform:scaleX(.917);transform-origin:0 0">Orientation</div>
<svg style="left:981px;top:284px" width="16" height="15"><rect x="0.5" y="0.5" width="14" height="13" fill="#f0f000" stroke="#000"/><circle cx="5" cy="5" r="1.5" fill="none" stroke="#000"/><circle cx="10" cy="9" r="2" fill="none" stroke="#000"/><rect x="3" y="9" width="2" height="2" fill="#000"/><rect x="10" y="3" width="2" height="2" fill="#000"/></svg>
<div class="t" style="left:1004px;top:287px;font-size:12px;transform:scaleX(.917);transform-origin:0 0">Porosity</div>
<!-- chart -->
<div class="a" style="left:547px;top:306px;width:528px;height:148px;background:#efefef"></div>
<div class="a" style="left:547px;top:431px;width:4px;height:23px;background:#fff"></div>
<div class="a" style="left:579px;top:314px;width:490px;height:117px;background:#fff;border-top:1px solid #a0a0a0"></div>
<div class="a" style="left:580px;top:315px;width:48px;height:115px;background:#4b0060;border:1px solid #000"></div>
<div class="a" style="left:629px;top:394px;width:48px;height:36px;background:#e0008c;border:1px solid #000"></div>
<div class="a" style="left:677px;top:387px;width:48px;height:43px;background:#ee5800;border:1px solid #000"></div>
<div class="a" style="left:726px;top:338px;width:48px;height:92px;background:#fce000;border:1px solid #000"></div>
<div class="a" style="left:775px;top:349px;width:48px;height:81px;background:#66aa00;border:1px solid #000"></div>
<div class="a" style="left:824px;top:377px;width:48px;height:53px;background:#0030e0;border:1px solid #000"></div>
<div class="a" style="left:873px;top:421px;width:48px;height:9px;background:#00c8e8;border:1px solid #000"></div>
<div class="a" style="left:628px;top:395px;width:1px;height:35px;background:#98a0a0"></div>
<div class="a" style="left:725px;top:388px;width:1px;height:42px;background:#98a0a0"></div>
<div class="a" style="left:774px;top:350px;width:1px;height:80px;background:#98a0a0"></div>
<div class="a" style="left:823px;top:378px;width:1px;height:52px;background:#98a0a0"></div>
<div class="a" style="left:872px;top:422px;width:1px;height:8px;background:#98a0a0"></div>
<div class="a" style="left:571px;top:430px;width:498px;height:2px;background:#a0a0a0"></div>
<div class="a" style="left:579px;top:314px;width:1px;height:117px;background:#a0a0a0"></div>
<div class="a" style="left:579px;top:431px;width:1px;height:4px;background:#888"></div>
<div class="a" style="left:628px;top:431px;width:1px;height:4px;background:#888"></div>
<div class="a" style="left:677px;top:431px;width:1px;height:4px;background:#888"></div>
<div class="a" style="left:726px;top:431px;width:1px;height:4px;background:#888"></div>
<div class="a" style="left:775px;top:431px;width:1px;height:4px;background:#888"></div>
<div class="a" style="left:824px;top:431px;width:1px;height:4px;background:#888"></div>
<div class="a" style="left:873px;top:431px;width:1px;height:4px;background:#888"></div>
<div class="a" style="left:922px;top:431px;width:1px;height:4px;background:#888"></div>
<div class="a" style="left:971px;top:431px;width:1px;height:4px;background:#888"></div>
<div class="a" style="left:1020px;top:431px;width:1px;height:4px;background:#888"></div>
<div class="a" style="left:571px;top:322px;width:8px;height:1px;background:#909090"></div>
<div class="t" style="left:551.0px;top:317px;font-size:9.5px;color:#6f7780">N,%</div>
<div class="a" style="left:571px;top:341px;width:8px;height:1px;background:#909090"></div>
<div class="t" style="left:558.5px;top:336px;font-size:9.5px;color:#6f7780">20</div>
<div class="a" style="left:571px;top:364px;width:8px;height:1px;background:#909090"></div>
<div class="t" style="left:558.5px;top:359px;font-size:9.5px;color:#6f7780">15</div>
<div class="a" style="left:571px;top:386px;width:8px;height:1px;background:#909090"></div>
<div class="t" style="left:558.5px;top:381px;font-size:9.5px;color:#6f7780">10</div>
<div class="a" style="left:571px;top:407px;width:8px;height:1px;background:#909090"></div>
<div class="t" style="left:563.7px;top:402px;font-size:9.5px;color:#6f7780">5</div>
<div class="t" style="left:626.5px;top:440px;font-size:9.5px;color:#6f7780;transform:translateX(-50%)">5.6</div>
<div class="t" style="left:676px;top:440px;font-size:9.5px;color:#6f7780;transform:translateX(-50%)">11.1</div>
<div class="t" style="left:725px;top:440px;font-size:9.5px;color:#6f7780;transform:translateX(-50%)">22.2</div>
<div class="t" style="left:774px;top:440px;font-size:9.5px;color:#6f7780;transform:translateX(-50%)">44.4</div>
<div class="t" style="left:823px;top:440px;font-size:9.5px;color:#6f7780;transform:translateX(-50%)">88.8</div>
<div class="t" style="left:872px;top:440px;font-size:9.5px;color:#6f7780;transform:translateX(-50%)">177.7</div>
<div class="t" style="left:921px;top:440px;font-size:9.5px;color:#6f7780;transform:translateX(-50%)">355.4</div>
<div class="t" style="left:970px;top:440px;font-size:9.5px;color:#6f7780;transform:translateX(-50%)">710.7</div>
<div class="t" style="left:1019.5px;top:440px;font-size:9.5px;color:#6f7780;transform:translateX(-50%)">1421.5</div>
<div class="t" style="left:1053px;top:440px;font-size:9.5px;color:#6f7780">um</div>
<div class="t" style="left:603.5px;top:372px;font-size:9.5px;font-weight:bold;color:#fff;transform:translate(-50%,-50%) rotate(-90deg)">21</div>
<div class="t" style="left:652.5px;top:374px;font-size:9.5px;font-weight:bold;color:#000;transform:translate(-50%,-50%) rotate(-90deg)">7</div>
<div class="t" style="left:700.5px;top:373px;font-size:9.5px;font-weight:bold;color:#000;transform:translate(-50%,-50%) rotate(-90deg)">8</div>
<div class="t" style="left:749.5px;top:372px;font-size:9.5px;font-weight:bold;color:#fff;transform:translate(-50%,-50%) rotate(-90deg)">17</div>
<div class="t" style="left:798.5px;top:372px;font-size:9.5px;font-weight:bold;color:#fff;transform:translate(-50%,-50%) rotate(-90deg)">15</div>
<div class="t" style="left:849px;top:372px;font-size:9.5px;font-weight:bold;color:#000;transform:translate(-50%,-50%) rotate(-90deg)">10</div>
<div class="t" style="left:899px;top:373px;font-size:9.5px;font-weight:bold;color:#000;transform:translate(-50%,-50%) rotate(-90deg)">2</div>
<div class="t" style="left:947px;top:373px;font-size:9.5px;font-weight:bold;color:#000;transform:translate(-50%,-50%) rotate(-90deg)">0</div>
<div class="t" style="left:995px;top:373px;font-size:9.5px;font-weight:bold;color:#000;transform:translate(-50%,-50%) rotate(-90deg)">0</div>
<div class="t" style="left:1045px;top:373px;font-size:9.5px;font-weight:bold;color:#000;transform:translate(-50%,-50%) rotate(-90deg)">0</div>

<!-- analysis panel -->


<!-- bottom toolbar -->
<div class="a" style="left:8px;top:768px;width:1079px;height:32px;background:linear-gradient(180deg,#fcfdfe 0,#f3f5fa 30%,#dde3f0 34%,#d5dcec 100%)"></div>
<div class="a" style="left:8px;top:798px;width:1079px;height:5px;background:linear-gradient(180deg,#a0a0a0 0,#a0a0a0 1.5px,#fff 1.5px,#fff 2.5px,#a0a0a0 2.5px,#a0a0a0 3.5px,#fff 3.5px)"></div>
<div class="a" style="left:8px;top:769px;width:115px;height:30px;background:#f0f0f0;border-right:1px solid #c5c5c5"></div>
<!-- status bar -->
<div class="a" style="left:8px;top:803px;width:1079px;height:21px;background:linear-gradient(180deg,#efecea 0,#efecea 19px,#fff 19px)"></div>

<!-- ===== table ===== -->
<div class="a" style="left:546px;top:464px;width:536px;height:238px;border:1px solid #828790;background:#fff"></div>
<div class="a" style="left:547px;top:465px;width:516px;height:24px;background:linear-gradient(180deg,#fff 0,#fff 40%,#f3f4f6 45%,#eff0f2 100%);border-bottom:1px solid #d5d5d5"></div>
<div class="a" style="left:749px;top:465px;width:1px;height:23px;background:#e3e4e6"></div>
<div class="a" style="left:853px;top:465px;width:1px;height:23px;background:#e3e4e6"></div>
<div class="a" style="left:1007px;top:465px;width:1px;height:23px;background:#e3e4e6"></div>
<div class="a" style="left:1059px;top:465px;width:1px;height:23px;background:#e3e4e6"></div>
<div class="t" style="left:553px;top:472px;font-size:12px;transform:scaleX(.917);transform-origin:0 0">Description</div>
<div class="t" style="left:756px;top:472px;font-size:12px;transform:scaleX(.917);transform-origin:0 0">Abbreviation</div>
<div class="t" style="left:859px;top:472px;font-size:12px;transform:scaleX(.917);transform-origin:0 0">Value</div>
<div class="t" style="left:1014px;top:472px;font-size:12px;transform:scaleX(.917);transform-origin:0 0">Unit</div>
<div class="a" style="left:547px;top:507.5px;width:512px;height:1px;background:#f0f0f0"></div>
<div class="t" style="left:553px;top:493.5px;font-size:12px;transform:scaleX(.917);transform-origin:0 0">Object area</div>
<div class="t" style="left:756px;top:493.5px;font-size:12px;transform:scaleX(.917);transform-origin:0 0">Obj.Ar</div>
<div class="t" style="left:859px;top:493.5px;font-size:12px;transform:scaleX(.917);transform-origin:0 0">251457.83764</div>
<div class="t" style="left:1014px;top:493.5px;font-size:12px;transform:scaleX(.917);transform-origin:0 0">um^2</div>
<div class="a" style="left:547px;top:525.0px;width:512px;height:1px;background:#f0f0f0"></div>
<div class="t" style="left:553px;top:511.0px;font-size:12px;transform:scaleX(.917);transform-origin:0 0">Percent object area</div>
<div class="t" style="left:756px;top:511.0px;font-size:12px;transform:scaleX(.917);transform-origin:0 0">Obj.Ar/T.Ar</div>
<div class="t" style="left:859px;top:511.0px;font-size:12px;transform:scaleX(.917);transform-origin:0 0">7.24602</div>
<div class="t" style="left:1014px;top:511.0px;font-size:12px;transform:scaleX(.917);transform-origin:0 0">%</div>
<div class="a" style="left:547px;top:542.5px;width:512px;height:1px;background:#f0f0f0"></div>
<div class="t" style="left:553px;top:528.5px;font-size:12px;transform:scaleX(.917);transform-origin:0 0">Total ROI perimeter</div>
<div class="t" style="left:756px;top:528.5px;font-size:12px;transform:scaleX(.917);transform-origin:0 0">T.Pm</div>
<div class="t" style="left:859px;top:528.5px;font-size:12px;transform:scaleX(.917);transform-origin:0 0">7448.26671</div>
<div class="t" style="left:1014px;top:528.5px;font-size:12px;transform:scaleX(.917);transform-origin:0 0">um</div>
<div class="a" style="left:547px;top:560.0px;width:512px;height:1px;background:#f0f0f0"></div>
<div class="t" style="left:553px;top:546.0px;font-size:12px;transform:scaleX(.917);transform-origin:0 0">Object perimeter</div>
<div class="t" style="left:756px;top:546.0px;font-size:12px;transform:scaleX(.917);transform-origin:0 0">Obj.Pm</div>
<div class="t" style="left:859px;top:546.0px;font-size:12px;transform:scaleX(.917);transform-origin:0 0">20929.94600</div>
<div class="t" style="left:1014px;top:546.0px;font-size:12px;transform:scaleX(.917);transform-origin:0 0">um</div>
<div class="a" style="left:547px;top:577.5px;width:512px;height:1px;background:#f0f0f0"></div>
<div class="t" style="left:553px;top:563.5px;font-size:12px;transform:scaleX(.917);transform-origin:0 0">Object perimeter / area ratio</div>
<div class="t" style="left:756px;top:563.5px;font-size:12px;transform:scaleX(.917);transform-origin:0 0">Obj.Pm/Obj.Ar</div>
<div class="t" style="left:859px;top:563.5px;font-size:12px;transform:scaleX(.917);transform-origin:0 0">0.08323</div>
<div class="t" style="left:1014px;top:563.5px;font-size:12px;transform:scaleX(.917);transform-origin:0 0">1/um</div>
<div class="a" style="left:547px;top:595.0px;width:512px;height:1px;background:#f0f0f0"></div>
<div class="t" style="left:553px;top:581.0px;font-size:12px;transform:scaleX(.917);transform-origin:0 0">Average object area</div>
<div class="t" style="left:756px;top:581.0px;font-size:12px;transform:scaleX(.917);transform-origin:0 0">Av.Obj.Ar</div>
<div class="t" style="left:859px;top:581.0px;font-size:12px;transform:scaleX(.917);transform-origin:0 0">3143.22297</div>
<div class="t" style="left:1014px;top:581.0px;font-size:12px;transform:scaleX(.917);transform-origin:0 0">um^2</div>
<div class="a" style="left:547px;top:612.5px;width:512px;height:1px;background:#f0f0f0"></div>
<div class="t" style="left:553px;top:598.5px;font-size:12px;transform:scaleX(.917);transform-origin:0 0">Average object area-equivalent circle ...</div>
<div class="t" style="left:756px;top:598.5px;font-size:12px;transform:scaleX(.917);transform-origin:0 0">Av.Obj.ECDa</div>
<div class="t" style="left:859px;top:598.5px;font-size:12px;transform:scaleX(.917);transform-origin:0 0">63.26196</div>
<div class="t" style="left:1014px;top:598.5px;font-size:12px;transform:scaleX(.917);transform-origin:0 0">um</div>
<div class="a" style="left:547px;top:630.0px;width:512px;height:1px;background:#f0f0f0"></div>
<div class="t" style="left:553px;top:616.0px;font-size:12px;transform:scaleX(.917);transform-origin:0 0">Fragmentation index</div>
<div class="t" style="left:756px;top:616.0px;font-size:12px;transform:scaleX(.917);transform-origin:0 0">Fr.I</div>
<div class="t" style="left:859px;top:616.0px;font-size:12px;transform:scaleX(.917);transform-origin:0 0">0.01314</div>
<div class="t" style="left:1014px;top:616.0px;font-size:12px;transform:scaleX(.917);transform-origin:0 0">1/um</div>
<div class="a" style="left:547px;top:647.5px;width:512px;height:1px;background:#f0f0f0"></div>
<div class="t" style="left:553px;top:633.5px;font-size:12px;transform:scaleX(.917);transform-origin:0 0">Euler number</div>
<div class="t" style="left:756px;top:633.5px;font-size:12px;transform:scaleX(.917);transform-origin:0 0">Eu.N</div>
<div class="t" style="left:859px;top:633.5px;font-size:12px;transform:scaleX(.917);transform-origin:0 0">75</div>
<div class="a" style="left:547px;top:665.0px;width:512px;height:1px;background:#f0f0f0"></div>
<div class="t" style="left:553px;top:651.0px;font-size:12px;transform:scaleX(.917);transform-origin:0 0">Number of closed pores</div>
<div class="t" style="left:756px;top:651.0px;font-size:12px;transform:scaleX(.917);transform-origin:0 0">Po.N(cl)</div>
<div class="t" style="left:859px;top:651.0px;font-size:12px;transform:scaleX(.917);transform-origin:0 0">5</div>
<div class="a" style="left:547px;top:682.5px;width:512px;height:1px;background:#f0f0f0"></div>
<div class="t" style="left:553px;top:668.5px;font-size:12px;transform:scaleX(.917);transform-origin:0 0">Area of closed pores</div>
<div class="t" style="left:756px;top:668.5px;font-size:12px;transform:scaleX(.917);transform-origin:0 0">Po.Ar(cl)</div>
<div class="t" style="left:859px;top:668.5px;font-size:12px;transform:scaleX(.917);transform-origin:0 0">228.34053</div>
<div class="t" style="left:1014px;top:668.5px;font-size:12px;transform:scaleX(.917);transform-origin:0 0">um^2</div>
<div class="t" style="left:553px;top:686.0px;font-size:12px;transform:scaleX(.917);transform-origin:0 0">Perimeter of closed pores</div>
<div class="t" style="left:756px;top:686.0px;font-size:12px;transform:scaleX(.917);transform-origin:0 0">Po.Pm(cl)</div>
<div class="t" style="left:859px;top:686.0px;font-size:12px;transform:scaleX(.917);transform-origin:0 0">88.95634</div>
<div class="t" style="left:1014px;top:686.0px;font-size:12px;transform:scaleX(.917);transform-origin:0 0">um</div>
<div class="a" style="left:750px;top:489px;width:1px;height:212px;background:#f0f0f0"></div>
<div class="a" style="left:854px;top:489px;width:1px;height:212px;background:#f0f0f0"></div>
<div class="a" style="left:1008px;top:489px;width:1px;height:212px;background:#f0f0f0"></div>

<div class="a" style="left:1063px;top:465px;width:17px;height:236px;background:#ececec"></div>
<svg style="left:1067px;top:472px" width="9" height="6"><path d="M0.5 4.5 L4.5 0.5 L8.5 4.5 Z" fill="#404040"/></svg>
<div class="a" style="left:1063px;top:506px;width:16px;height:58px;border:1px solid #a8a8a8;border-radius:2px;background:linear-gradient(90deg,#f4f4f4,#dcdcdc)"></div>
<div class="a" style="left:1067px;top:531px;width:7px;height:6px;background:repeating-linear-gradient(180deg,#555 0,#555 1px,transparent 1px,transparent 2.5px)"></div>
<svg style="left:1067px;top:688px" width="9" height="6"><path d="M0.5 0.5 L4.5 4.5 L8.5 0.5 Z" fill="#404040"/></svg>

<!-- ===== palette ===== -->
<div class="a" style="left:543px;top:708px;width:541px;height:60px;border-left:1px solid #a0a0a0;background:#f0f0f0"></div>
<div class="a" style="left:544px;top:709px;width:540px;height:16px;background:linear-gradient(180deg,#dce7f4,#d3e0f1)"></div>
<div class="a" style="left:544px;top:725px;width:540px;height:1px;background:#b8c4d4"></div>
<div class="t" style="left:549px;top:711px;font-size:12px;transform:scaleX(.917);transform-origin:0 0">Palette</div>
<svg style="left:1071px;top:714px" width="8" height="7"><path d="M1 1 L7 6 M7 1 L1 6" stroke="#000" stroke-width="1.6"/></svg>
<svg style="left:550px;top:731px" width="15" height="15"><circle cx="7.5" cy="7.5" r="6.8" fill="#fff" stroke="#aaa" stroke-width="1"/><path d="M7.5 0.7 A6.8 6.8 0 0 0 7.5 14.3 A3.4 3.4 0 0 0 7.5 7.5 A3.4 3.4 0 0 1 7.5 0.7 Z" fill="#000"/><circle cx="7.5" cy="4.1" r="1.3" fill="#000"/><circle cx="7.5" cy="10.9" r="1.3" fill="#fff"/></svg>
<div class="a" style="left:576px;top:728px;width:500px;height:21px;border:1px solid #707070;border-radius:3px;background:linear-gradient(180deg,#f2f2f2 0,#ebebeb 50%,#dddddd 51%,#cfcfcf 100%)"></div>
<div class="t" style="left:582px;top:733px;font-size:12px;transform:scaleX(.917);transform-origin:0 0">Color</div>
<svg style="left:1064px;top:736px" width="9" height="6"><path d="M0 0 L8 0 L4 5 Z" fill="#000"/></svg>
<div class="a" style="left:576px;top:752px;width:496px;height:14px;border-top:1px solid #909090;background:linear-gradient(90deg,#000 0px,#000 19px,#200018 23px,#400040 33px,#5a0a80 63px,#4010a0 69px,#c010b0 86px,#f01060 95px,#f00000 106px,#ff3000 123px,#e86000 154px,#f0a000 169px,#f8e800 181px,#c8d000 202px,#60b000 228px,#009010 245px,#008030 255px,#00806a 257px,#1040d0 267px,#0010e0 279px,#2060f0 288px,#10a0e0 302px,#00f0f8 329px,#40f8e0 348px,#80f0d0 374px,#d0f8f0 405px,#fff 433px,#fff 496px)"></div>
<svg style="left:551px;top:759px" width="13" height="7"><rect x="0" y="1" width="9" height="5" fill="#b0b0b0"/><path d="M10 3 L13 3" stroke="#b0b0b0"/></svg>

<!-- bottom toolbar icons -->
<div class="a" style="left:13px;top:775px;width:2px;height:18px;background:repeating-linear-gradient(180deg,#a0a0a0 0,#a0a0a0 1px,transparent 1px,transparent 5px)"></div>
<div class="a" style="left:22px;top:774px;width:23px;height:21px;border:2px solid #6e6e6e;border-radius:4px;background:#e4e4e4;box-shadow:inset 0 0 0 1px #fafafa"></div>
<svg style="left:26px;top:777px" width="16" height="15"><rect x="0.5" y="0.5" width="15" height="14" fill="#fff" stroke="#000"/><rect x="1" y="1" width="14" height="2.5" fill="#000080"/><path d="M7 14 L7 8 L9 8 L10 6 L13 6 L13 9 L15 9 L15 14 Z" fill="#f0f060" stroke="#808000" stroke-width=".6"/></svg>
<div class="a" style="left:46px;top:774px;width:23px;height:21px;border:2px solid #6e6e6e;border-radius:4px;background:#e4e4e4;box-shadow:inset 0 0 0 1px #fafafa"></div>
<svg style="left:50px;top:777px" width="16" height="15"><rect x="0.5" y="0.5" width="15" height="14" fill="#fff" stroke="#000"/><rect x="1" y="1" width="14" height="2.5" fill="#000080"/><path d="M0 7.5 L16 7.5" stroke="#e00000" stroke-width="1.2"/><circle cx="7" cy="7" r="3" fill="none" stroke="#606000" stroke-width="1.2"/><path d="M9 9 L13 14" stroke="#800000" stroke-width="2"/></svg>
<div class="a" style="left:70px;top:774px;width:23px;height:21px;border:2px solid #6e6e6e;border-radius:4px;background:#e4e4e4;box-shadow:inset 0 0 0 1px #fafafa"></div>
<svg style="left:74px;top:777px" width="16" height="15"><rect x="0.5" y="0.5" width="15" height="14" fill="#fff" stroke="#000"/><rect x="1" y="1" width="14" height="2.5" fill="#000080"/><rect x="4" y="8" width="10" height="5" fill="url(#rbw)"/><defs><linearGradient id="rbw"><stop offset="0" stop-color="#e00000"/><stop offset=".3" stop-color="#f0f000"/><stop offset=".6" stop-color="#00c000"/><stop offset="1" stop-color="#0040f0"/></linearGradient></defs></svg>
<div class="a" style="left:94px;top:774px;width:23px;height:21px;border:2px solid #6e6e6e;border-radius:4px;background:#e4e4e4;box-shadow:inset 0 0 0 1px #fafafa"></div>
<svg style="left:98px;top:777px" width="16" height="15"><rect x="0.5" y="0.5" width="15" height="14" fill="#fff" stroke="#000"/><rect x="1" y="1" width="14" height="2.5" fill="#000080"/><rect x="5" y="6" width="10" height="8" fill="#2020a0"/><path d="M6 9 L14 9 M6 11.5 L14 11.5 M8.5 8 L8.5 14 M11.5 8 L11.5 14" stroke="#fff" stroke-width=".8"/></svg>

<!-- status bar items -->
<div class="a" style="left:843px;top:803px;width:1px;height:19px;background:#d5d3d0"></div>
<div class="a" style="left:955px;top:803px;width:1px;height:19px;background:#d5d3d0"></div>
<div class="a" style="left:1067px;top:803px;width:1px;height:19px;background:#d5d3d0"></div>
<svg style="left:857px;top:807px" width="15" height="14"><circle cx="5.5" cy="5.5" r="4.5" fill="#a0f0f8" stroke="#202020" stroke-width="1.3"/><path d="M8.5 8.5 L13.5 13" stroke="#000080" stroke-width="2.2"/></svg>
<div class="t" style="left:885px;top:807px;font-size:11.6px">76%</div>
<svg style="left:967px;top:806px" width="19" height="14"><path d="M4 1 L17 1 L18 4 L5 4 Z" fill="#c0c0c0" stroke="#808080" stroke-width=".6"/><rect x="1" y="4" width="14" height="8" fill="#20b020" stroke="#006000" stroke-width=".8"/><path d="M4 5 L4 11 M7 5 L7 11 M10 5 L10 11 M13 5 L13 11" stroke="#006000" stroke-width=".8"/><path d="M15 4 L18 4 L18 10 L15 12" fill="#d0d0d0" stroke="#808080" stroke-width=".6"/></svg>
<div class="t" style="left:997px;top:807px;font-size:11.6px">720 / 720</div>
<svg style="left:1074px;top:812px" width="11" height="11"><g fill="#b8b8b8"><rect x="8" y="0" width="2" height="2"/><rect x="5" y="3" width="2" height="2"/><rect x="8" y="3" width="2" height="2"/><rect x="2" y="6" width="2" height="2"/><rect x="5" y="6" width="2" height="2"/><rect x="8" y="6" width="2" height="2"/></g></svg>

</body></html>
